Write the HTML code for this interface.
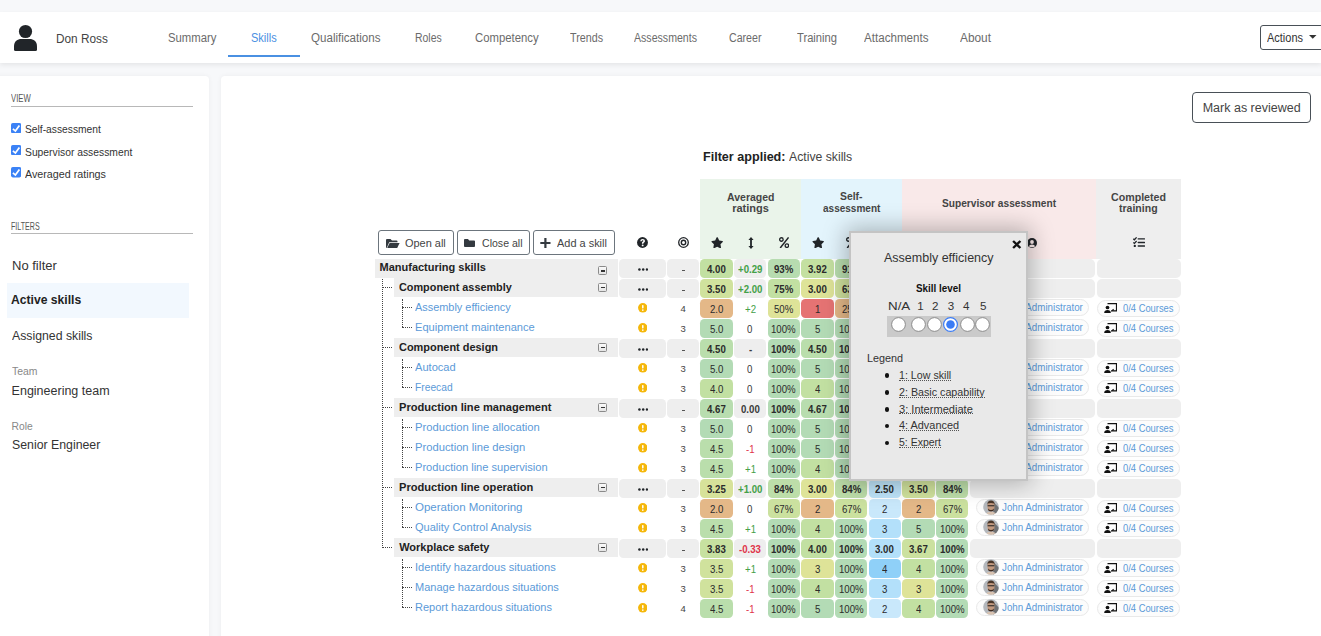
<!DOCTYPE html>
<html><head><meta charset="utf-8"><style>
html,body{margin:0;padding:0;}
body{width:1321px;height:636px;overflow:hidden;position:relative;background:#f7f8fa;font-family:"Liberation Sans",sans-serif;}
.t{position:absolute;white-space:nowrap;transform-origin:0 0;}
.r{position:absolute;}
</style></head><body>
<div class="r" style="left:0.00px;top:12.00px;width:1321.00px;height:51.00px;background:#fff;box-shadow:0 2px 5px rgba(0,0,0,.08);"></div>
<svg class="r" style="left:13.00px;top:24.00px" width="25.00" height="28.00" viewBox="0 0 25 28"><circle cx="12.5" cy="7.5" r="6.6" fill="#212529"/><path d="M1 22.5 C1 17 4.5 15 8.5 15 H16.5 C20.5 15 24 17 24 22.5 V25.5 Q24 27 22.5 27 H2.5 Q1 27 1 25.5 Z" fill="#212529"/></svg>
<div class="t" style="left:55.50px;top:33.00px;font-size:12.50px;line-height:12.50px;transform:scaleX(0.9454);color:#444;">Don Ross</div>
<div class="t" style="left:167.80px;top:32.00px;font-size:12.00px;line-height:12.00px;transform:scaleX(0.9426);color:#6b6b6b;">Summary</div>
<div class="t" style="left:251.00px;top:32.00px;font-size:12.00px;line-height:12.00px;transform:scaleX(0.9179);color:#4a90e2;">Skills</div>
<div class="t" style="left:311.00px;top:32.00px;font-size:12.00px;line-height:12.00px;transform:scaleX(0.9646);color:#6b6b6b;">Qualifications</div>
<div class="t" style="left:414.70px;top:32.00px;font-size:12.00px;line-height:12.00px;transform:scaleX(0.8697);color:#6b6b6b;">Roles</div>
<div class="t" style="left:475.40px;top:32.00px;font-size:12.00px;line-height:12.00px;transform:scaleX(0.9443);color:#6b6b6b;">Competency</div>
<div class="t" style="left:570.00px;top:32.00px;font-size:12.00px;line-height:12.00px;transform:scaleX(0.8943);color:#6b6b6b;">Trends</div>
<div class="t" style="left:634.00px;top:32.00px;font-size:12.00px;line-height:12.00px;transform:scaleX(0.8830);color:#6b6b6b;">Assessments</div>
<div class="t" style="left:728.50px;top:32.00px;font-size:12.00px;line-height:12.00px;transform:scaleX(0.8856);color:#6b6b6b;">Career</div>
<div class="t" style="left:797.00px;top:32.00px;font-size:12.00px;line-height:12.00px;transform:scaleX(0.9324);color:#6b6b6b;">Training</div>
<div class="t" style="left:864.00px;top:32.00px;font-size:12.00px;line-height:12.00px;transform:scaleX(0.9670);color:#6b6b6b;">Attachments</div>
<div class="t" style="left:960.00px;top:32.00px;font-size:12.00px;line-height:12.00px;transform:scaleX(0.9888);color:#6b6b6b;">About</div>
<div class="r" style="left:228.00px;top:55.00px;width:72.00px;height:2.00px;background:#4a90e2;"></div>
<div class="r" style="left:1260.00px;top:25.00px;width:80.00px;height:25.00px;border:1px solid #495057;border-radius:3px;box-sizing:border-box;background:#fff;"></div>
<div class="t" style="left:1267.00px;top:32.00px;font-size:12.00px;line-height:12.00px;transform:scaleX(0.9149);color:#333;">Actions</div>
<svg class="r" style="left:1309.00px;top:35.00px" width="8.00" height="4.00" viewBox="0 0 8 4"><path d="M0 0 H7.5 L3.75 3.8 Z" fill="#333"/></svg>
<div class="r" style="left:-10.00px;top:76.00px;width:219.00px;height:600.00px;background:#fff;border-radius:4px;box-shadow:0 0 5px rgba(0,0,0,.05);"></div>
<div class="r" style="left:221.00px;top:76.00px;width:1110.00px;height:600.00px;background:#fff;border-radius:4px;box-shadow:0 0 5px rgba(0,0,0,.05);"></div>
<div class="t" style="left:11.30px;top:94.00px;font-size:10.20px;line-height:10.20px;transform:scaleX(0.7562);color:#555;">VIEW</div>
<div class="r" style="left:11.00px;top:106.00px;width:182.00px;height:1.00px;background:#b8b8b8;"></div>
<svg class="r" style="left:11.00px;top:122.70px" width="10.20" height="10.40" viewBox="0 0 10.2 10.4"><rect x="0" y="0" width="10.2" height="10.4" rx="1.8" fill="#3b82f6"/><path d="M1.9 5.9 L4.4 8.1 L8.4 2.5" stroke="#fff" stroke-width="1.7" fill="none"/></svg>
<div class="t" style="left:24.50px;top:123.00px;font-size:11.60px;line-height:11.60px;transform:scaleX(0.8851);color:#333;">Self-assessment</div>
<svg class="r" style="left:11.00px;top:145.00px" width="10.20" height="10.40" viewBox="0 0 10.2 10.4"><rect x="0" y="0" width="10.2" height="10.4" rx="1.8" fill="#3b82f6"/><path d="M1.9 5.9 L4.4 8.1 L8.4 2.5" stroke="#fff" stroke-width="1.7" fill="none"/></svg>
<div class="t" style="left:24.50px;top:146.00px;font-size:11.60px;line-height:11.60px;transform:scaleX(0.8901);color:#333;">Supervisor assessment</div>
<svg class="r" style="left:11.00px;top:167.30px" width="10.20" height="10.40" viewBox="0 0 10.2 10.4"><rect x="0" y="0" width="10.2" height="10.4" rx="1.8" fill="#3b82f6"/><path d="M1.9 5.9 L4.4 8.1 L8.4 2.5" stroke="#fff" stroke-width="1.7" fill="none"/></svg>
<div class="t" style="left:24.50px;top:168.00px;font-size:11.60px;line-height:11.60px;transform:scaleX(0.9257);color:#333;">Averaged ratings</div>
<div class="t" style="left:11.30px;top:222.00px;font-size:10.20px;line-height:10.20px;transform:scaleX(0.6966);color:#555;">FILTERS</div>
<div class="r" style="left:11.00px;top:233.00px;width:182.00px;height:1.00px;background:#b8b8b8;"></div>
<div class="t" style="left:11.80px;top:260.00px;font-size:12.50px;line-height:12.50px;transform:scaleX(1.0407);color:#333;">No filter</div>
<div class="r" style="left:7.00px;top:283.00px;width:182.00px;height:35.00px;background:#f2f8fe;"></div>
<div class="t" style="left:11.30px;top:294.00px;font-size:12.50px;line-height:12.50px;font-weight:bold;transform:scaleX(0.9716);color:#222;">Active skills</div>
<div class="t" style="left:11.50px;top:330.00px;font-size:12.50px;line-height:12.50px;transform:scaleX(0.9817);color:#333;">Assigned skills</div>
<div class="t" style="left:11.60px;top:367.00px;font-size:10.30px;line-height:10.30px;transform:scaleX(1.0119);color:#888;">Team</div>
<div class="t" style="left:11.60px;top:385.00px;font-size:12.50px;line-height:12.50px;color:#333;">Engineering team</div>
<div class="t" style="left:11.60px;top:422.00px;font-size:10.30px;line-height:10.30px;color:#888;">Role</div>
<div class="t" style="left:11.60px;top:439.00px;font-size:12.50px;line-height:12.50px;transform:scaleX(0.9849);color:#333;">Senior Engineer</div>
<div class="r" style="left:1192.00px;top:92.00px;width:119.00px;height:31.00px;border:1px solid #495057;border-radius:4px;box-sizing:border-box;"></div>
<div class="t" style="left:1202.70px;top:102.00px;font-size:12.50px;line-height:12.50px;color:#444;">Mark as reviewed</div>
<div class="t" style="left:702.80px;top:151.00px;font-size:12.50px;line-height:12.50px;font-weight:bold;transform:scaleX(1.0067);color:#222;">Filter applied:</div>
<div class="t" style="left:789.40px;top:151.00px;font-size:12.50px;line-height:12.50px;transform:scaleX(0.9783);color:#444;">Active skills</div>
<div class="r" style="left:700.00px;top:179.00px;width:101.00px;height:80.00px;background:#eaf4ea;"></div>
<div class="r" style="left:801.00px;top:179.00px;width:101.00px;height:80.00px;background:#e3f4fc;"></div>
<div class="r" style="left:902.00px;top:179.00px;width:194.00px;height:80.00px;background:#f9e9e9;"></div>
<div class="r" style="left:1096.00px;top:179.00px;width:85.00px;height:80.00px;background:#eeeeee;"></div>
<div class="t" style="left:726.80px;top:192.00px;font-size:11.00px;line-height:11.00px;font-weight:bold;transform:scaleX(0.9548);color:#454545;font-weight:600;">Averaged</div>
<div class="t" style="left:732.15px;top:203.00px;font-size:11.00px;line-height:11.00px;font-weight:bold;color:#454545;">ratings</div>
<div class="t" style="left:839.80px;top:191.00px;font-size:11.00px;line-height:11.00px;font-weight:bold;transform:scaleX(0.9434);color:#454545;">Self-</div>
<div class="t" style="left:822.60px;top:203.00px;font-size:11.00px;line-height:11.00px;font-weight:bold;transform:scaleX(0.9111);color:#454545;">assessment</div>
<div class="t" style="left:942.00px;top:198.00px;font-size:11.00px;line-height:11.00px;font-weight:bold;transform:scaleX(0.9231);color:#454545;">Supervisor assessment</div>
<div class="t" style="left:1111.00px;top:192.00px;font-size:11.00px;line-height:11.00px;font-weight:bold;transform:scaleX(0.9675);color:#454545;">Completed</div>
<div class="t" style="left:1119.40px;top:203.00px;font-size:11.00px;line-height:11.00px;font-weight:bold;transform:scaleX(0.9566);color:#454545;">training</div>
<div class="r" style="left:378.30px;top:230.40px;width:75.30px;height:24.50px;border:1px solid #6c757d;border-radius:3px;box-sizing:border-box;background:#fff;"></div>
<div class="r" style="left:457.00px;top:230.40px;width:73.00px;height:24.50px;border:1px solid #6c757d;border-radius:3px;box-sizing:border-box;background:#fff;"></div>
<div class="r" style="left:533.20px;top:230.40px;width:81.50px;height:24.50px;border:1px solid #6c757d;border-radius:3px;box-sizing:border-box;background:#fff;"></div>
<svg class="r" style="left:385.50px;top:238.50px" width="14.00" height="9.00" viewBox="0 0 14 9"><path d="M0 1 Q0 0 1 0 H4.5 L6 1.5 H10.5 Q11.5 1.5 11.5 2.5 V3.3 H3.2 L0.8 8.8 H0 Z" fill="#343a40"/><path d="M3.6 3.9 H13.6 L11.2 9 H1.2 Z" fill="#343a40"/></svg>
<div class="t" style="left:405.20px;top:238.00px;font-size:11.50px;line-height:11.50px;transform:scaleX(0.9522);color:#444;">Open all</div>
<svg class="r" style="left:464.00px;top:239.00px" width="11.00" height="8.00" viewBox="0 0 11 8"><path d="M0 0.9 Q0 0 0.9 0 H4 L5.2 1.4 H10.1 Q11 1.4 11 2.3 V7.1 Q11 8 10.1 8 H0.9 Q0 8 0 7.1 Z" fill="#343a40"/></svg>
<div class="t" style="left:481.70px;top:238.00px;font-size:11.50px;line-height:11.50px;transform:scaleX(0.9184);color:#444;">Close all</div>
<svg class="r" style="left:540.00px;top:238.00px" width="11.00" height="10.00" viewBox="0 0 11 10"><path d="M4.3 0 H6.5 V3.9 H10.5 V6.1 H6.5 V10 H4.3 V6.1 H0.3 V3.9 H4.3 Z" fill="#343a40"/></svg>
<div class="t" style="left:557.20px;top:238.00px;font-size:11.50px;line-height:11.50px;transform:scaleX(0.9523);color:#444;">Add a skill</div>
<svg class="r" style="left:637.00px;top:236.80px" width="11.00" height="11.00" viewBox="0 0 11 11"><circle cx="5.5" cy="5.5" r="5.45" fill="#212529"/><path d="M3.2 4.3 Q3.3 1.9 5.6 1.9 Q8 1.9 8 3.9 Q8 5.1 6.8 5.7 Q6.4 5.9 6.4 6.7 H4.9 Q4.8 5.2 5.9 4.6 Q6.4 4.3 6.4 3.9 Q6.4 3.3 5.6 3.3 Q4.8 3.3 4.7 4.3 Z" fill="#fff"/><circle cx="5.65" cy="8.4" r="0.95" fill="#fff"/></svg>
<svg class="r" style="left:677.70px;top:236.80px" width="11.00" height="11.00" viewBox="0 0 11 11"><circle cx="5.5" cy="5.5" r="4.8" fill="none" stroke="#212529" stroke-width="1.3"/><circle cx="5.5" cy="5.5" r="2.2" fill="none" stroke="#212529" stroke-width="1.4"/></svg>
<svg class="r" style="left:710.80px;top:236.70px" width="12.40" height="11.40" viewBox="0 0 576 512"><path d="M259.3 17.8L194 150.2 47.9 171.5c-26.2 3.8-36.7 36.1-17.7 54.6l105.7 103-25 145.5c-4.5 26.3 23.2 46 46.4 33.7L288 439.6l130.7 68.7c23.2 12.2 50.9-7.4 46.4-33.7l-25-145.5 105.7-103c19-18.5 8.5-50.8-17.7-54.6L382 150.2 316.7 17.8c-11.7-23.6-45.6-23.9-57.4 0z" fill="#212529"/></svg>
<svg class="r" style="left:747.50px;top:236.50px" width="6.00" height="12.00" viewBox="0 0 6 12"><path d="M3 0 L5.6 3 H3.9 V9 H5.6 L3 12 L0.4 9 H2.1 V3 H0.4 Z" fill="#212529"/></svg>
<svg class="r" style="left:778.80px;top:236.80px" width="10.40" height="11.40" viewBox="0 0 10.4 11.4"><circle cx="2.4" cy="2.5" r="1.75" fill="none" stroke="#212529" stroke-width="1.3"/><circle cx="7.9" cy="8.7" r="1.75" fill="none" stroke="#212529" stroke-width="1.3"/><path d="M9.6 0.4 L1.2 11" stroke="#212529" stroke-width="1.5"/></svg>
<svg class="r" style="left:811.50px;top:236.70px" width="12.40" height="11.40" viewBox="0 0 576 512"><path d="M259.3 17.8L194 150.2 47.9 171.5c-26.2 3.8-36.7 36.1-17.7 54.6l105.7 103-25 145.5c-4.5 26.3 23.2 46 46.4 33.7L288 439.6l130.7 68.7c23.2 12.2 50.9-7.4 46.4-33.7l-25-145.5 105.7-103c19-18.5 8.5-50.8-17.7-54.6L382 150.2 316.7 17.8c-11.7-23.6-45.6-23.9-57.4 0z" fill="#212529"/></svg>
<svg class="r" style="left:845.60px;top:236.80px" width="10.40" height="11.40" viewBox="0 0 10.4 11.4"><circle cx="2.4" cy="2.5" r="1.75" fill="none" stroke="#212529" stroke-width="1.3"/><circle cx="7.9" cy="8.7" r="1.75" fill="none" stroke="#212529" stroke-width="1.3"/><path d="M9.6 0.4 L1.2 11" stroke="#212529" stroke-width="1.5"/></svg>
<svg class="r" style="left:1027.20px;top:237.60px" width="10.00" height="10.00" viewBox="0 0 10 10"><circle cx="5" cy="5" r="5" fill="#212529"/><circle cx="5" cy="4" r="1.9" fill="#f9e9e9"/><path d="M1.8 8.2 Q2.6 6.4 5 6.4 Q7.4 6.4 8.2 8.2 Q6.9 9.3 5 9.3 Q3.1 9.3 1.8 8.2 Z" fill="#f9e9e9"/></svg>
<svg class="r" style="left:1132.80px;top:236.80px" width="12.50" height="10.50" viewBox="0 0 12.5 10.5"><path d="M0.3 1.8 L1.4 2.8 L3.6 0.4" stroke="#212529" stroke-width="1.3" fill="none"/><path d="M0.3 5.4 L1.4 6.4 L3.6 4" stroke="#212529" stroke-width="1.3" fill="none"/><circle cx="1.8" cy="9" r="1.15" fill="#212529"/><rect x="4.6" y="1.2" width="7.5" height="1.35" rx="0.6" fill="#212529"/><rect x="4.6" y="4.8" width="7.5" height="1.35" rx="0.6" fill="#212529"/><rect x="4.6" y="8.35" width="7.5" height="1.35" rx="0.6" fill="#212529"/></svg>
<div class="r" style="left:375.00px;top:259.30px;width:242.70px;height:18.70px;background:#eeeeee;"></div>
<div class="t" style="left:379.50px;top:262.00px;font-size:11.00px;line-height:11.00px;font-weight:bold;color:#222;">Manufacturing skills</div>
<div class="r" style="left:598.20px;top:266.40px;width:9.20px;height:9.00px;border:1px solid #8a8a8a;border-radius:1.5px;box-sizing:border-box;background:linear-gradient(#fafafa,#e4e4e4);"></div>
<div class="r" style="left:601.00px;top:270.30px;width:4.40px;height:1.30px;background:#333;"></div>
<div class="r" style="left:619.00px;top:259.30px;width:47.00px;height:18.80px;background:#eeeeee;border-radius:4.5px;"></div>
<svg class="r" style="left:637.50px;top:267.50px" width="10.50" height="3.20" viewBox="0 0 10.5 3.2"><circle cx="1.4" cy="1.5" r="1.25" fill="#212529"/><circle cx="5.2" cy="1.5" r="1.25" fill="#212529"/><circle cx="9" cy="1.5" r="1.25" fill="#212529"/></svg>
<div class="r" style="left:667.20px;top:259.30px;width:31.60px;height:18.80px;background:#eeeeee;border-radius:4.5px;"></div>
<div class="r" style="left:682.00px;top:269.60px;width:3.00px;height:1.00px;background:#555;"></div>
<div class="r" style="left:700.30px;top:259.30px;width:32.40px;height:18.80px;background:rgb(194,224,162);border-radius:4.5px;"></div>
<div class="t" style="left:707.10px;top:265.00px;font-size:10.40px;line-height:10.40px;font-weight:bold;transform:scaleX(0.9284);color:#2b2b2b;">4.00</div>
<div class="r" style="left:733.97px;top:259.30px;width:32.40px;height:18.80px;background:#eeeeee;border-radius:4.5px;"></div>
<div class="t" style="left:737.96px;top:265.00px;font-size:10.40px;line-height:10.40px;font-weight:bold;transform:scaleX(0.9284);color:#43a047;">+0.29</div>
<div class="r" style="left:767.64px;top:259.30px;width:32.40px;height:18.80px;background:rgb(183,220,176);border-radius:4.5px;"></div>
<div class="t" style="left:774.18px;top:265.00px;font-size:10.40px;line-height:10.40px;font-weight:bold;transform:scaleX(0.9284);color:#2b2b2b;">93%</div>
<div class="r" style="left:801.31px;top:259.30px;width:32.40px;height:18.80px;background:rgb(196,224,161);border-radius:4.5px;"></div>
<div class="t" style="left:808.11px;top:265.00px;font-size:10.40px;line-height:10.40px;font-weight:bold;transform:scaleX(0.9284);color:#2b2b2b;">3.92</div>
<div class="r" style="left:834.98px;top:259.30px;width:32.40px;height:18.80px;background:rgb(184,221,174);border-radius:4.5px;"></div>
<div class="t" style="left:841.52px;top:265.00px;font-size:10.40px;line-height:10.40px;font-weight:bold;transform:scaleX(0.9284);color:#2b2b2b;">91%</div>
<div class="r" style="left:868.65px;top:259.30px;width:32.40px;height:18.80px;background:rgb(176,223,250);border-radius:4.5px;"></div>
<div class="t" style="left:875.45px;top:265.00px;font-size:10.40px;line-height:10.40px;font-weight:bold;transform:scaleX(0.9284);color:#2b2b2b;">3.08</div>
<div class="r" style="left:902.32px;top:259.30px;width:32.40px;height:18.80px;background:rgb(193,224,164);border-radius:4.5px;"></div>
<div class="t" style="left:909.12px;top:265.00px;font-size:10.40px;line-height:10.40px;font-weight:bold;transform:scaleX(0.9284);color:#2b2b2b;">4.08</div>
<div class="r" style="left:935.99px;top:259.30px;width:32.40px;height:18.80px;background:rgb(182,220,177);border-radius:4.5px;"></div>
<div class="t" style="left:942.53px;top:265.00px;font-size:10.40px;line-height:10.40px;font-weight:bold;transform:scaleX(0.9284);color:#2b2b2b;">95%</div>
<div class="r" style="left:969.70px;top:259.30px;width:125.40px;height:18.80px;background:#eeeeee;border-radius:5px;"></div>
<div class="r" style="left:1097.00px;top:259.30px;width:84.00px;height:18.80px;background:#eeeeee;border-radius:5px;"></div>
<div class="r" style="left:394.20px;top:278.30px;width:223.50px;height:19.20px;background:#eeeeee;"></div>
<div class="t" style="left:399.20px;top:282.00px;font-size:11.00px;line-height:11.00px;font-weight:bold;transform:scaleX(0.9869);color:#222;">Component assembly</div>
<div class="r" style="left:598.20px;top:283.20px;width:9.20px;height:9.00px;border:1px solid #8a8a8a;border-radius:1.5px;box-sizing:border-box;background:linear-gradient(#fafafa,#e4e4e4);"></div>
<div class="r" style="left:601.00px;top:287.10px;width:4.40px;height:1.30px;background:#333;"></div>
<div class="r" style="left:619.00px;top:279.30px;width:47.00px;height:18.80px;background:#eeeeee;border-radius:4.5px;"></div>
<svg class="r" style="left:637.50px;top:287.50px" width="10.50" height="3.20" viewBox="0 0 10.5 3.2"><circle cx="1.4" cy="1.5" r="1.25" fill="#212529"/><circle cx="5.2" cy="1.5" r="1.25" fill="#212529"/><circle cx="9" cy="1.5" r="1.25" fill="#212529"/></svg>
<div class="r" style="left:667.20px;top:279.30px;width:31.60px;height:18.80px;background:#eeeeee;border-radius:4.5px;"></div>
<div class="r" style="left:682.00px;top:289.60px;width:3.00px;height:1.00px;background:#555;"></div>
<div class="r" style="left:700.30px;top:279.30px;width:32.40px;height:18.80px;background:rgb(208,226,157);border-radius:4.5px;"></div>
<div class="t" style="left:707.10px;top:285.00px;font-size:10.40px;line-height:10.40px;font-weight:bold;transform:scaleX(0.9284);color:#2b2b2b;">3.50</div>
<div class="r" style="left:733.97px;top:279.30px;width:32.40px;height:18.80px;background:#eeeeee;border-radius:4.5px;"></div>
<div class="t" style="left:737.96px;top:285.00px;font-size:10.40px;line-height:10.40px;font-weight:bold;transform:scaleX(0.9284);color:#43a047;">+2.00</div>
<div class="r" style="left:767.64px;top:279.30px;width:32.40px;height:18.80px;background:rgb(194,224,162);border-radius:4.5px;"></div>
<div class="t" style="left:774.18px;top:285.00px;font-size:10.40px;line-height:10.40px;font-weight:bold;transform:scaleX(0.9284);color:#2b2b2b;">75%</div>
<div class="r" style="left:801.31px;top:279.30px;width:32.40px;height:18.80px;background:rgb(222,227,152);border-radius:4.5px;"></div>
<div class="t" style="left:808.11px;top:285.00px;font-size:10.40px;line-height:10.40px;font-weight:bold;transform:scaleX(0.9284);color:#2b2b2b;">3.00</div>
<div class="r" style="left:834.98px;top:279.30px;width:32.40px;height:18.80px;background:rgb(207,225,157);border-radius:4.5px;"></div>
<div class="t" style="left:841.52px;top:285.00px;font-size:10.40px;line-height:10.40px;font-weight:bold;transform:scaleX(0.9284);color:#2b2b2b;">63%</div>
<div class="r" style="left:868.65px;top:279.30px;width:32.40px;height:18.80px;background:rgb(190,228,250);border-radius:4.5px;"></div>
<div class="t" style="left:875.45px;top:285.00px;font-size:10.40px;line-height:10.40px;font-weight:bold;transform:scaleX(0.9284);color:#2b2b2b;">2.50</div>
<div class="r" style="left:902.32px;top:279.30px;width:32.40px;height:18.80px;background:rgb(194,224,162);border-radius:4.5px;"></div>
<div class="t" style="left:909.12px;top:285.00px;font-size:10.40px;line-height:10.40px;font-weight:bold;transform:scaleX(0.9284);color:#2b2b2b;">4.00</div>
<div class="r" style="left:935.99px;top:279.30px;width:32.40px;height:18.80px;background:rgb(186,221,172);border-radius:4.5px;"></div>
<div class="t" style="left:942.53px;top:285.00px;font-size:10.40px;line-height:10.40px;font-weight:bold;transform:scaleX(0.9284);color:#2b2b2b;">88%</div>
<div class="r" style="left:969.70px;top:279.30px;width:125.40px;height:18.80px;background:#eeeeee;border-radius:5px;"></div>
<div class="r" style="left:1097.00px;top:279.30px;width:84.00px;height:18.80px;background:#eeeeee;border-radius:5px;"></div>
<div class="t" style="left:415.40px;top:302.00px;font-size:10.50px;line-height:10.50px;transform:scaleX(1.0391);color:#5b9ad8;">Assembly efficiency</div>
<svg class="r" style="left:637.60px;top:303.10px" width="9.60" height="9.60" viewBox="0 0 9.6 9.6"><circle cx="4.8" cy="4.8" r="4.75" fill="#f5b70a"/><rect x="4.05" y="2.1" width="1.5" height="3.3" rx="0.6" fill="#fff"/><circle cx="4.8" cy="7.1" r="0.85" fill="#fff"/></svg>
<div class="t" style="left:680.55px;top:304.00px;font-size:9.50px;line-height:9.50px;color:#444;">4</div>
<div class="r" style="left:700.30px;top:299.30px;width:32.40px;height:18.80px;background:rgb(228,184,136);border-radius:4.5px;"></div>
<div class="t" style="left:709.79px;top:305.00px;font-size:10.40px;line-height:10.40px;transform:scaleX(0.9284);color:#2b2b2b;">2.0</div>
<div class="t" style="left:744.67px;top:305.00px;font-size:10.40px;line-height:10.40px;transform:scaleX(0.9284);color:#43a047;">+2</div>
<div class="r" style="left:767.64px;top:299.30px;width:32.40px;height:18.80px;background:rgb(222,227,152);border-radius:4.5px;"></div>
<div class="t" style="left:774.18px;top:305.00px;font-size:10.40px;line-height:10.40px;transform:scaleX(0.9284);color:#2b2b2b;">50%</div>
<div class="r" style="left:801.31px;top:299.30px;width:32.40px;height:18.80px;background:rgb(229,115,115);border-radius:4.5px;"></div>
<div class="t" style="left:814.82px;top:305.00px;font-size:10.40px;line-height:10.40px;transform:scaleX(0.9284);color:#2b2b2b;">1</div>
<div class="r" style="left:834.98px;top:299.30px;width:32.40px;height:18.80px;background:rgb(228,184,136);border-radius:4.5px;"></div>
<div class="t" style="left:841.52px;top:305.00px;font-size:10.40px;line-height:10.40px;transform:scaleX(0.9284);color:#2b2b2b;">25%</div>
<div class="r" style="left:868.65px;top:299.30px;width:32.40px;height:18.80px;background:rgb(179,224,250);border-radius:4.5px;"></div>
<div class="t" style="left:882.16px;top:305.00px;font-size:10.40px;line-height:10.40px;transform:scaleX(0.9284);color:#2b2b2b;">3</div>
<div class="r" style="left:902.32px;top:299.30px;width:32.40px;height:18.80px;background:rgb(222,227,152);border-radius:4.5px;"></div>
<div class="t" style="left:915.83px;top:305.00px;font-size:10.40px;line-height:10.40px;transform:scaleX(0.9284);color:#2b2b2b;">3</div>
<div class="r" style="left:935.99px;top:299.30px;width:32.40px;height:18.80px;background:rgb(194,224,162);border-radius:4.5px;"></div>
<div class="t" style="left:942.53px;top:305.00px;font-size:10.40px;line-height:10.40px;transform:scaleX(0.9284);color:#2b2b2b;">75%</div>
<div class="r" style="left:976.00px;top:298.60px;width:113.00px;height:17.20px;border:1px solid #e9e9e9;border-radius:9px;box-sizing:border-box;background:#fcfcfc;"></div>
<svg class="r" style="left:983.00px;top:299.10px" width="16.00" height="16.00" viewBox="0 0 16 16"><defs><clipPath id="cp2"><circle cx="8" cy="8" r="7.8"/></clipPath></defs><g clip-path="url(#cp2)"><rect width="16" height="16" fill="#b4b8bd"/><path d="M11 4 Q14 6 16 9 V16 H10 Z" fill="#6f7174"/><path d="M4.4 7 Q4.3 2.8 8 2.6 Q11.7 2.8 11.6 7 L11.2 10.8 Q8 14 4.8 10.8 Z" fill="#c29a80"/><path d="M4.2 6.2 Q4.2 1.6 8 1.6 Q11.8 1.6 11.8 6.2 L11.2 4.6 Q8 3.3 4.8 4.6 Z" fill="#4a3628"/><rect x="4.6" y="6.2" width="6.8" height="1.1" fill="#2e2a28"/><path d="M5 9.6 Q8 12.6 11 9.6 L10.6 11.6 Q8 13.6 5.4 11.6 Z" fill="#3f2e24"/><path d="M2.5 16 Q3.5 12.8 8 12.8 Q12.5 12.8 13.5 16 Z" fill="#d8c2b0"/></g></svg>
<div class="t" style="left:1002.00px;top:302.00px;font-size:10.50px;line-height:10.50px;transform:scaleX(0.9293);color:#5b9ad8;">John Administrator</div>
<div class="r" style="left:1096.70px;top:299.90px;width:83.60px;height:17.50px;border:1px solid #e9e9e9;border-radius:9px;box-sizing:border-box;background:#fcfcfc;"></div>
<svg class="r" style="left:1103.60px;top:303.20px" width="13.50" height="10.50" viewBox="0 0 13.5 10.5"><path d="M3.5 0.6 H12.5 V7.9 H7.2" fill="none" stroke="#111" stroke-width="1.2"/><path d="M6.6 8.4 L9.2 5.8 L10.3 7.3 Z" fill="#111"/><circle cx="3.5" cy="4.5" r="1.85" fill="#111"/><path d="M0.2 9.9 Q0.4 7.1 3.5 7.1 Q6.6 7.1 6.8 9.9 Z" fill="#111"/></svg>
<div class="t" style="left:1122.80px;top:303.00px;font-size:10.50px;line-height:10.50px;transform:scaleX(0.8922);color:#5b9ad8;">0/4 Courses</div>
<div class="t" style="left:415.40px;top:322.00px;font-size:10.50px;line-height:10.50px;transform:scaleX(1.0570);color:#5b9ad8;">Equipment maintenance</div>
<svg class="r" style="left:637.60px;top:323.10px" width="9.60" height="9.60" viewBox="0 0 9.6 9.6"><circle cx="4.8" cy="4.8" r="4.75" fill="#f5b70a"/><rect x="4.05" y="2.1" width="1.5" height="3.3" rx="0.6" fill="#fff"/><circle cx="4.8" cy="7.1" r="0.85" fill="#fff"/></svg>
<div class="t" style="left:680.55px;top:324.00px;font-size:9.50px;line-height:9.50px;color:#444;">3</div>
<div class="r" style="left:700.30px;top:319.30px;width:32.40px;height:18.80px;background:rgb(179,219,181);border-radius:4.5px;"></div>
<div class="t" style="left:709.79px;top:325.00px;font-size:10.40px;line-height:10.40px;transform:scaleX(0.9284);color:#2b2b2b;">5.0</div>
<div class="t" style="left:747.48px;top:325.00px;font-size:10.40px;line-height:10.40px;transform:scaleX(0.9284);color:#3a3a3a;">0</div>
<div class="r" style="left:767.64px;top:319.30px;width:32.40px;height:18.80px;background:rgb(179,219,181);border-radius:4.5px;"></div>
<div class="t" style="left:771.49px;top:325.00px;font-size:10.40px;line-height:10.40px;transform:scaleX(0.9284);color:#2b2b2b;">100%</div>
<div class="r" style="left:801.31px;top:319.30px;width:32.40px;height:18.80px;background:rgb(179,219,181);border-radius:4.5px;"></div>
<div class="t" style="left:814.82px;top:325.00px;font-size:10.40px;line-height:10.40px;transform:scaleX(0.9284);color:#2b2b2b;">5</div>
<div class="r" style="left:834.98px;top:319.30px;width:32.40px;height:18.80px;background:rgb(179,219,181);border-radius:4.5px;"></div>
<div class="t" style="left:838.83px;top:325.00px;font-size:10.40px;line-height:10.40px;transform:scaleX(0.9284);color:#2b2b2b;">100%</div>
<div class="r" style="left:868.65px;top:319.30px;width:32.40px;height:18.80px;background:rgb(179,224,250);border-radius:4.5px;"></div>
<div class="t" style="left:882.16px;top:325.00px;font-size:10.40px;line-height:10.40px;transform:scaleX(0.9284);color:#2b2b2b;">3</div>
<div class="r" style="left:902.32px;top:319.30px;width:32.40px;height:18.80px;background:rgb(179,219,181);border-radius:4.5px;"></div>
<div class="t" style="left:915.83px;top:325.00px;font-size:10.40px;line-height:10.40px;transform:scaleX(0.9284);color:#2b2b2b;">5</div>
<div class="r" style="left:935.99px;top:319.30px;width:32.40px;height:18.80px;background:rgb(179,219,181);border-radius:4.5px;"></div>
<div class="t" style="left:939.84px;top:325.00px;font-size:10.40px;line-height:10.40px;transform:scaleX(0.9284);color:#2b2b2b;">100%</div>
<div class="r" style="left:976.00px;top:318.60px;width:113.00px;height:17.20px;border:1px solid #e9e9e9;border-radius:9px;box-sizing:border-box;background:#fcfcfc;"></div>
<svg class="r" style="left:983.00px;top:319.10px" width="16.00" height="16.00" viewBox="0 0 16 16"><defs><clipPath id="cp3"><circle cx="8" cy="8" r="7.8"/></clipPath></defs><g clip-path="url(#cp3)"><rect width="16" height="16" fill="#b4b8bd"/><path d="M11 4 Q14 6 16 9 V16 H10 Z" fill="#6f7174"/><path d="M4.4 7 Q4.3 2.8 8 2.6 Q11.7 2.8 11.6 7 L11.2 10.8 Q8 14 4.8 10.8 Z" fill="#c29a80"/><path d="M4.2 6.2 Q4.2 1.6 8 1.6 Q11.8 1.6 11.8 6.2 L11.2 4.6 Q8 3.3 4.8 4.6 Z" fill="#4a3628"/><rect x="4.6" y="6.2" width="6.8" height="1.1" fill="#2e2a28"/><path d="M5 9.6 Q8 12.6 11 9.6 L10.6 11.6 Q8 13.6 5.4 11.6 Z" fill="#3f2e24"/><path d="M2.5 16 Q3.5 12.8 8 12.8 Q12.5 12.8 13.5 16 Z" fill="#d8c2b0"/></g></svg>
<div class="t" style="left:1002.00px;top:322.00px;font-size:10.50px;line-height:10.50px;transform:scaleX(0.9293);color:#5b9ad8;">John Administrator</div>
<div class="r" style="left:1096.70px;top:319.90px;width:83.60px;height:17.50px;border:1px solid #e9e9e9;border-radius:9px;box-sizing:border-box;background:#fcfcfc;"></div>
<svg class="r" style="left:1103.60px;top:323.20px" width="13.50" height="10.50" viewBox="0 0 13.5 10.5"><path d="M3.5 0.6 H12.5 V7.9 H7.2" fill="none" stroke="#111" stroke-width="1.2"/><path d="M6.6 8.4 L9.2 5.8 L10.3 7.3 Z" fill="#111"/><circle cx="3.5" cy="4.5" r="1.85" fill="#111"/><path d="M0.2 9.9 Q0.4 7.1 3.5 7.1 Q6.6 7.1 6.8 9.9 Z" fill="#111"/></svg>
<div class="t" style="left:1122.80px;top:323.00px;font-size:10.50px;line-height:10.50px;transform:scaleX(0.8922);color:#5b9ad8;">0/4 Courses</div>
<div class="r" style="left:394.20px;top:338.30px;width:223.50px;height:19.20px;background:#eeeeee;"></div>
<div class="t" style="left:399.20px;top:342.00px;font-size:11.00px;line-height:11.00px;font-weight:bold;transform:scaleX(0.9940);color:#222;">Component design</div>
<div class="r" style="left:598.20px;top:343.20px;width:9.20px;height:9.00px;border:1px solid #8a8a8a;border-radius:1.5px;box-sizing:border-box;background:linear-gradient(#fafafa,#e4e4e4);"></div>
<div class="r" style="left:601.00px;top:347.10px;width:4.40px;height:1.30px;background:#333;"></div>
<div class="r" style="left:619.00px;top:339.30px;width:47.00px;height:18.80px;background:#eeeeee;border-radius:4.5px;"></div>
<svg class="r" style="left:637.50px;top:347.50px" width="10.50" height="3.20" viewBox="0 0 10.5 3.2"><circle cx="1.4" cy="1.5" r="1.25" fill="#212529"/><circle cx="5.2" cy="1.5" r="1.25" fill="#212529"/><circle cx="9" cy="1.5" r="1.25" fill="#212529"/></svg>
<div class="r" style="left:667.20px;top:339.30px;width:31.60px;height:18.80px;background:#eeeeee;border-radius:4.5px;"></div>
<div class="r" style="left:682.00px;top:349.60px;width:3.00px;height:1.00px;background:#555;"></div>
<div class="r" style="left:700.30px;top:339.30px;width:32.40px;height:18.80px;background:rgb(186,222,172);border-radius:4.5px;"></div>
<div class="t" style="left:707.10px;top:345.00px;font-size:10.40px;line-height:10.40px;font-weight:bold;transform:scaleX(0.9284);color:#2b2b2b;">4.50</div>
<div class="r" style="left:733.97px;top:339.30px;width:32.40px;height:18.80px;background:#eeeeee;border-radius:4.5px;"></div>
<div class="t" style="left:748.57px;top:345.00px;font-size:10.40px;line-height:10.40px;font-weight:bold;transform:scaleX(0.9284);color:#3a3a3a;">-</div>
<div class="r" style="left:767.64px;top:339.30px;width:32.40px;height:18.80px;background:rgb(179,219,181);border-radius:4.5px;"></div>
<div class="t" style="left:771.49px;top:345.00px;font-size:10.40px;line-height:10.40px;font-weight:bold;transform:scaleX(0.9284);color:#2b2b2b;">100%</div>
<div class="r" style="left:801.31px;top:339.30px;width:32.40px;height:18.80px;background:rgb(186,222,172);border-radius:4.5px;"></div>
<div class="t" style="left:808.11px;top:345.00px;font-size:10.40px;line-height:10.40px;font-weight:bold;transform:scaleX(0.9284);color:#2b2b2b;">4.50</div>
<div class="r" style="left:834.98px;top:339.30px;width:32.40px;height:18.80px;background:rgb(179,219,181);border-radius:4.5px;"></div>
<div class="t" style="left:838.83px;top:345.00px;font-size:10.40px;line-height:10.40px;font-weight:bold;transform:scaleX(0.9284);color:#2b2b2b;">100%</div>
<div class="r" style="left:868.65px;top:339.30px;width:32.40px;height:18.80px;background:rgb(179,224,250);border-radius:4.5px;"></div>
<div class="t" style="left:875.45px;top:345.00px;font-size:10.40px;line-height:10.40px;font-weight:bold;transform:scaleX(0.9284);color:#2b2b2b;">3.00</div>
<div class="r" style="left:902.32px;top:339.30px;width:32.40px;height:18.80px;background:rgb(186,222,172);border-radius:4.5px;"></div>
<div class="t" style="left:909.12px;top:345.00px;font-size:10.40px;line-height:10.40px;font-weight:bold;transform:scaleX(0.9284);color:#2b2b2b;">4.50</div>
<div class="r" style="left:935.99px;top:339.30px;width:32.40px;height:18.80px;background:rgb(179,219,181);border-radius:4.5px;"></div>
<div class="t" style="left:939.84px;top:345.00px;font-size:10.40px;line-height:10.40px;font-weight:bold;transform:scaleX(0.9284);color:#2b2b2b;">100%</div>
<div class="r" style="left:969.70px;top:339.30px;width:125.40px;height:18.80px;background:#eeeeee;border-radius:5px;"></div>
<div class="r" style="left:1097.00px;top:339.30px;width:84.00px;height:18.80px;background:#eeeeee;border-radius:5px;"></div>
<div class="t" style="left:415.40px;top:362.00px;font-size:10.50px;line-height:10.50px;transform:scaleX(1.0558);color:#5b9ad8;">Autocad</div>
<svg class="r" style="left:637.60px;top:363.10px" width="9.60" height="9.60" viewBox="0 0 9.6 9.6"><circle cx="4.8" cy="4.8" r="4.75" fill="#f5b70a"/><rect x="4.05" y="2.1" width="1.5" height="3.3" rx="0.6" fill="#fff"/><circle cx="4.8" cy="7.1" r="0.85" fill="#fff"/></svg>
<div class="t" style="left:680.55px;top:364.00px;font-size:9.50px;line-height:9.50px;color:#444;">3</div>
<div class="r" style="left:700.30px;top:359.30px;width:32.40px;height:18.80px;background:rgb(179,219,181);border-radius:4.5px;"></div>
<div class="t" style="left:709.79px;top:365.00px;font-size:10.40px;line-height:10.40px;transform:scaleX(0.9284);color:#2b2b2b;">5.0</div>
<div class="t" style="left:747.48px;top:365.00px;font-size:10.40px;line-height:10.40px;transform:scaleX(0.9284);color:#3a3a3a;">0</div>
<div class="r" style="left:767.64px;top:359.30px;width:32.40px;height:18.80px;background:rgb(179,219,181);border-radius:4.5px;"></div>
<div class="t" style="left:771.49px;top:365.00px;font-size:10.40px;line-height:10.40px;transform:scaleX(0.9284);color:#2b2b2b;">100%</div>
<div class="r" style="left:801.31px;top:359.30px;width:32.40px;height:18.80px;background:rgb(179,219,181);border-radius:4.5px;"></div>
<div class="t" style="left:814.82px;top:365.00px;font-size:10.40px;line-height:10.40px;transform:scaleX(0.9284);color:#2b2b2b;">5</div>
<div class="r" style="left:834.98px;top:359.30px;width:32.40px;height:18.80px;background:rgb(179,219,181);border-radius:4.5px;"></div>
<div class="t" style="left:838.83px;top:365.00px;font-size:10.40px;line-height:10.40px;transform:scaleX(0.9284);color:#2b2b2b;">100%</div>
<div class="r" style="left:868.65px;top:359.30px;width:32.40px;height:18.80px;background:rgb(179,224,250);border-radius:4.5px;"></div>
<div class="t" style="left:882.16px;top:365.00px;font-size:10.40px;line-height:10.40px;transform:scaleX(0.9284);color:#2b2b2b;">3</div>
<div class="r" style="left:902.32px;top:359.30px;width:32.40px;height:18.80px;background:rgb(179,219,181);border-radius:4.5px;"></div>
<div class="t" style="left:915.83px;top:365.00px;font-size:10.40px;line-height:10.40px;transform:scaleX(0.9284);color:#2b2b2b;">5</div>
<div class="r" style="left:935.99px;top:359.30px;width:32.40px;height:18.80px;background:rgb(179,219,181);border-radius:4.5px;"></div>
<div class="t" style="left:939.84px;top:365.00px;font-size:10.40px;line-height:10.40px;transform:scaleX(0.9284);color:#2b2b2b;">100%</div>
<div class="r" style="left:976.00px;top:358.60px;width:113.00px;height:17.20px;border:1px solid #e9e9e9;border-radius:9px;box-sizing:border-box;background:#fcfcfc;"></div>
<svg class="r" style="left:983.00px;top:359.10px" width="16.00" height="16.00" viewBox="0 0 16 16"><defs><clipPath id="cp5"><circle cx="8" cy="8" r="7.8"/></clipPath></defs><g clip-path="url(#cp5)"><rect width="16" height="16" fill="#b4b8bd"/><path d="M11 4 Q14 6 16 9 V16 H10 Z" fill="#6f7174"/><path d="M4.4 7 Q4.3 2.8 8 2.6 Q11.7 2.8 11.6 7 L11.2 10.8 Q8 14 4.8 10.8 Z" fill="#c29a80"/><path d="M4.2 6.2 Q4.2 1.6 8 1.6 Q11.8 1.6 11.8 6.2 L11.2 4.6 Q8 3.3 4.8 4.6 Z" fill="#4a3628"/><rect x="4.6" y="6.2" width="6.8" height="1.1" fill="#2e2a28"/><path d="M5 9.6 Q8 12.6 11 9.6 L10.6 11.6 Q8 13.6 5.4 11.6 Z" fill="#3f2e24"/><path d="M2.5 16 Q3.5 12.8 8 12.8 Q12.5 12.8 13.5 16 Z" fill="#d8c2b0"/></g></svg>
<div class="t" style="left:1002.00px;top:362.00px;font-size:10.50px;line-height:10.50px;transform:scaleX(0.9293);color:#5b9ad8;">John Administrator</div>
<div class="r" style="left:1096.70px;top:359.90px;width:83.60px;height:17.50px;border:1px solid #e9e9e9;border-radius:9px;box-sizing:border-box;background:#fcfcfc;"></div>
<svg class="r" style="left:1103.60px;top:363.20px" width="13.50" height="10.50" viewBox="0 0 13.5 10.5"><path d="M3.5 0.6 H12.5 V7.9 H7.2" fill="none" stroke="#111" stroke-width="1.2"/><path d="M6.6 8.4 L9.2 5.8 L10.3 7.3 Z" fill="#111"/><circle cx="3.5" cy="4.5" r="1.85" fill="#111"/><path d="M0.2 9.9 Q0.4 7.1 3.5 7.1 Q6.6 7.1 6.8 9.9 Z" fill="#111"/></svg>
<div class="t" style="left:1122.80px;top:363.00px;font-size:10.50px;line-height:10.50px;transform:scaleX(0.8922);color:#5b9ad8;">0/4 Courses</div>
<div class="t" style="left:415.40px;top:382.00px;font-size:10.50px;line-height:10.50px;transform:scaleX(0.9766);color:#5b9ad8;">Freecad</div>
<svg class="r" style="left:637.60px;top:383.10px" width="9.60" height="9.60" viewBox="0 0 9.6 9.6"><circle cx="4.8" cy="4.8" r="4.75" fill="#f5b70a"/><rect x="4.05" y="2.1" width="1.5" height="3.3" rx="0.6" fill="#fff"/><circle cx="4.8" cy="7.1" r="0.85" fill="#fff"/></svg>
<div class="t" style="left:680.55px;top:384.00px;font-size:9.50px;line-height:9.50px;color:#444;">3</div>
<div class="r" style="left:700.30px;top:379.30px;width:32.40px;height:18.80px;background:rgb(194,224,162);border-radius:4.5px;"></div>
<div class="t" style="left:709.79px;top:385.00px;font-size:10.40px;line-height:10.40px;transform:scaleX(0.9284);color:#2b2b2b;">4.0</div>
<div class="t" style="left:747.48px;top:385.00px;font-size:10.40px;line-height:10.40px;transform:scaleX(0.9284);color:#3a3a3a;">0</div>
<div class="r" style="left:767.64px;top:379.30px;width:32.40px;height:18.80px;background:rgb(179,219,181);border-radius:4.5px;"></div>
<div class="t" style="left:771.49px;top:385.00px;font-size:10.40px;line-height:10.40px;transform:scaleX(0.9284);color:#2b2b2b;">100%</div>
<div class="r" style="left:801.31px;top:379.30px;width:32.40px;height:18.80px;background:rgb(194,224,162);border-radius:4.5px;"></div>
<div class="t" style="left:814.82px;top:385.00px;font-size:10.40px;line-height:10.40px;transform:scaleX(0.9284);color:#2b2b2b;">4</div>
<div class="r" style="left:834.98px;top:379.30px;width:32.40px;height:18.80px;background:rgb(179,219,181);border-radius:4.5px;"></div>
<div class="t" style="left:838.83px;top:385.00px;font-size:10.40px;line-height:10.40px;transform:scaleX(0.9284);color:#2b2b2b;">100%</div>
<div class="r" style="left:868.65px;top:379.30px;width:32.40px;height:18.80px;background:rgb(179,224,250);border-radius:4.5px;"></div>
<div class="t" style="left:882.16px;top:385.00px;font-size:10.40px;line-height:10.40px;transform:scaleX(0.9284);color:#2b2b2b;">3</div>
<div class="r" style="left:902.32px;top:379.30px;width:32.40px;height:18.80px;background:rgb(194,224,162);border-radius:4.5px;"></div>
<div class="t" style="left:915.83px;top:385.00px;font-size:10.40px;line-height:10.40px;transform:scaleX(0.9284);color:#2b2b2b;">4</div>
<div class="r" style="left:935.99px;top:379.30px;width:32.40px;height:18.80px;background:rgb(179,219,181);border-radius:4.5px;"></div>
<div class="t" style="left:939.84px;top:385.00px;font-size:10.40px;line-height:10.40px;transform:scaleX(0.9284);color:#2b2b2b;">100%</div>
<div class="r" style="left:976.00px;top:378.60px;width:113.00px;height:17.20px;border:1px solid #e9e9e9;border-radius:9px;box-sizing:border-box;background:#fcfcfc;"></div>
<svg class="r" style="left:983.00px;top:379.10px" width="16.00" height="16.00" viewBox="0 0 16 16"><defs><clipPath id="cp6"><circle cx="8" cy="8" r="7.8"/></clipPath></defs><g clip-path="url(#cp6)"><rect width="16" height="16" fill="#b4b8bd"/><path d="M11 4 Q14 6 16 9 V16 H10 Z" fill="#6f7174"/><path d="M4.4 7 Q4.3 2.8 8 2.6 Q11.7 2.8 11.6 7 L11.2 10.8 Q8 14 4.8 10.8 Z" fill="#c29a80"/><path d="M4.2 6.2 Q4.2 1.6 8 1.6 Q11.8 1.6 11.8 6.2 L11.2 4.6 Q8 3.3 4.8 4.6 Z" fill="#4a3628"/><rect x="4.6" y="6.2" width="6.8" height="1.1" fill="#2e2a28"/><path d="M5 9.6 Q8 12.6 11 9.6 L10.6 11.6 Q8 13.6 5.4 11.6 Z" fill="#3f2e24"/><path d="M2.5 16 Q3.5 12.8 8 12.8 Q12.5 12.8 13.5 16 Z" fill="#d8c2b0"/></g></svg>
<div class="t" style="left:1002.00px;top:382.00px;font-size:10.50px;line-height:10.50px;transform:scaleX(0.9293);color:#5b9ad8;">John Administrator</div>
<div class="r" style="left:1096.70px;top:379.90px;width:83.60px;height:17.50px;border:1px solid #e9e9e9;border-radius:9px;box-sizing:border-box;background:#fcfcfc;"></div>
<svg class="r" style="left:1103.60px;top:383.20px" width="13.50" height="10.50" viewBox="0 0 13.5 10.5"><path d="M3.5 0.6 H12.5 V7.9 H7.2" fill="none" stroke="#111" stroke-width="1.2"/><path d="M6.6 8.4 L9.2 5.8 L10.3 7.3 Z" fill="#111"/><circle cx="3.5" cy="4.5" r="1.85" fill="#111"/><path d="M0.2 9.9 Q0.4 7.1 3.5 7.1 Q6.6 7.1 6.8 9.9 Z" fill="#111"/></svg>
<div class="t" style="left:1122.80px;top:383.00px;font-size:10.50px;line-height:10.50px;transform:scaleX(0.8922);color:#5b9ad8;">0/4 Courses</div>
<div class="r" style="left:394.20px;top:398.30px;width:223.50px;height:19.20px;background:#eeeeee;"></div>
<div class="t" style="left:399.20px;top:402.00px;font-size:11.00px;line-height:11.00px;font-weight:bold;transform:scaleX(1.0096);color:#222;">Production line management</div>
<div class="r" style="left:598.20px;top:403.20px;width:9.20px;height:9.00px;border:1px solid #8a8a8a;border-radius:1.5px;box-sizing:border-box;background:linear-gradient(#fafafa,#e4e4e4);"></div>
<div class="r" style="left:601.00px;top:407.10px;width:4.40px;height:1.30px;background:#333;"></div>
<div class="r" style="left:619.00px;top:399.30px;width:47.00px;height:18.80px;background:#eeeeee;border-radius:4.5px;"></div>
<svg class="r" style="left:637.50px;top:407.50px" width="10.50" height="3.20" viewBox="0 0 10.5 3.2"><circle cx="1.4" cy="1.5" r="1.25" fill="#212529"/><circle cx="5.2" cy="1.5" r="1.25" fill="#212529"/><circle cx="9" cy="1.5" r="1.25" fill="#212529"/></svg>
<div class="r" style="left:667.20px;top:399.30px;width:31.60px;height:18.80px;background:#eeeeee;border-radius:4.5px;"></div>
<div class="r" style="left:682.00px;top:409.60px;width:3.00px;height:1.00px;background:#555;"></div>
<div class="r" style="left:700.30px;top:399.30px;width:32.40px;height:18.80px;background:rgb(184,221,175);border-radius:4.5px;"></div>
<div class="t" style="left:707.10px;top:405.00px;font-size:10.40px;line-height:10.40px;font-weight:bold;transform:scaleX(0.9284);color:#2b2b2b;">4.67</div>
<div class="r" style="left:733.97px;top:399.30px;width:32.40px;height:18.80px;background:#eeeeee;border-radius:4.5px;"></div>
<div class="t" style="left:740.77px;top:405.00px;font-size:10.40px;line-height:10.40px;font-weight:bold;transform:scaleX(0.9284);color:#3a3a3a;">0.00</div>
<div class="r" style="left:767.64px;top:399.30px;width:32.40px;height:18.80px;background:rgb(179,219,181);border-radius:4.5px;"></div>
<div class="t" style="left:771.49px;top:405.00px;font-size:10.40px;line-height:10.40px;font-weight:bold;transform:scaleX(0.9284);color:#2b2b2b;">100%</div>
<div class="r" style="left:801.31px;top:399.30px;width:32.40px;height:18.80px;background:rgb(184,221,175);border-radius:4.5px;"></div>
<div class="t" style="left:808.11px;top:405.00px;font-size:10.40px;line-height:10.40px;font-weight:bold;transform:scaleX(0.9284);color:#2b2b2b;">4.67</div>
<div class="r" style="left:834.98px;top:399.30px;width:32.40px;height:18.80px;background:rgb(179,219,181);border-radius:4.5px;"></div>
<div class="t" style="left:838.83px;top:405.00px;font-size:10.40px;line-height:10.40px;font-weight:bold;transform:scaleX(0.9284);color:#2b2b2b;">100%</div>
<div class="r" style="left:868.65px;top:399.30px;width:32.40px;height:18.80px;background:rgb(179,224,250);border-radius:4.5px;"></div>
<div class="t" style="left:875.45px;top:405.00px;font-size:10.40px;line-height:10.40px;font-weight:bold;transform:scaleX(0.9284);color:#2b2b2b;">3.00</div>
<div class="r" style="left:902.32px;top:399.30px;width:32.40px;height:18.80px;background:rgb(184,221,175);border-radius:4.5px;"></div>
<div class="t" style="left:909.12px;top:405.00px;font-size:10.40px;line-height:10.40px;font-weight:bold;transform:scaleX(0.9284);color:#2b2b2b;">4.67</div>
<div class="r" style="left:935.99px;top:399.30px;width:32.40px;height:18.80px;background:rgb(179,219,181);border-radius:4.5px;"></div>
<div class="t" style="left:939.84px;top:405.00px;font-size:10.40px;line-height:10.40px;font-weight:bold;transform:scaleX(0.9284);color:#2b2b2b;">100%</div>
<div class="r" style="left:969.70px;top:399.30px;width:125.40px;height:18.80px;background:#eeeeee;border-radius:5px;"></div>
<div class="r" style="left:1097.00px;top:399.30px;width:84.00px;height:18.80px;background:#eeeeee;border-radius:5px;"></div>
<div class="t" style="left:415.40px;top:422.00px;font-size:10.50px;line-height:10.50px;transform:scaleX(1.0690);color:#5b9ad8;">Production line allocation</div>
<svg class="r" style="left:637.60px;top:423.10px" width="9.60" height="9.60" viewBox="0 0 9.6 9.6"><circle cx="4.8" cy="4.8" r="4.75" fill="#f5b70a"/><rect x="4.05" y="2.1" width="1.5" height="3.3" rx="0.6" fill="#fff"/><circle cx="4.8" cy="7.1" r="0.85" fill="#fff"/></svg>
<div class="t" style="left:680.55px;top:424.00px;font-size:9.50px;line-height:9.50px;color:#444;">3</div>
<div class="r" style="left:700.30px;top:419.30px;width:32.40px;height:18.80px;background:rgb(179,219,181);border-radius:4.5px;"></div>
<div class="t" style="left:709.79px;top:425.00px;font-size:10.40px;line-height:10.40px;transform:scaleX(0.9284);color:#2b2b2b;">5.0</div>
<div class="t" style="left:747.48px;top:425.00px;font-size:10.40px;line-height:10.40px;transform:scaleX(0.9284);color:#3a3a3a;">0</div>
<div class="r" style="left:767.64px;top:419.30px;width:32.40px;height:18.80px;background:rgb(179,219,181);border-radius:4.5px;"></div>
<div class="t" style="left:771.49px;top:425.00px;font-size:10.40px;line-height:10.40px;transform:scaleX(0.9284);color:#2b2b2b;">100%</div>
<div class="r" style="left:801.31px;top:419.30px;width:32.40px;height:18.80px;background:rgb(179,219,181);border-radius:4.5px;"></div>
<div class="t" style="left:814.82px;top:425.00px;font-size:10.40px;line-height:10.40px;transform:scaleX(0.9284);color:#2b2b2b;">5</div>
<div class="r" style="left:834.98px;top:419.30px;width:32.40px;height:18.80px;background:rgb(179,219,181);border-radius:4.5px;"></div>
<div class="t" style="left:838.83px;top:425.00px;font-size:10.40px;line-height:10.40px;transform:scaleX(0.9284);color:#2b2b2b;">100%</div>
<div class="r" style="left:868.65px;top:419.30px;width:32.40px;height:18.80px;background:rgb(179,224,250);border-radius:4.5px;"></div>
<div class="t" style="left:882.16px;top:425.00px;font-size:10.40px;line-height:10.40px;transform:scaleX(0.9284);color:#2b2b2b;">3</div>
<div class="r" style="left:902.32px;top:419.30px;width:32.40px;height:18.80px;background:rgb(179,219,181);border-radius:4.5px;"></div>
<div class="t" style="left:915.83px;top:425.00px;font-size:10.40px;line-height:10.40px;transform:scaleX(0.9284);color:#2b2b2b;">5</div>
<div class="r" style="left:935.99px;top:419.30px;width:32.40px;height:18.80px;background:rgb(179,219,181);border-radius:4.5px;"></div>
<div class="t" style="left:939.84px;top:425.00px;font-size:10.40px;line-height:10.40px;transform:scaleX(0.9284);color:#2b2b2b;">100%</div>
<div class="r" style="left:976.00px;top:418.60px;width:113.00px;height:17.20px;border:1px solid #e9e9e9;border-radius:9px;box-sizing:border-box;background:#fcfcfc;"></div>
<svg class="r" style="left:983.00px;top:419.10px" width="16.00" height="16.00" viewBox="0 0 16 16"><defs><clipPath id="cp8"><circle cx="8" cy="8" r="7.8"/></clipPath></defs><g clip-path="url(#cp8)"><rect width="16" height="16" fill="#b4b8bd"/><path d="M11 4 Q14 6 16 9 V16 H10 Z" fill="#6f7174"/><path d="M4.4 7 Q4.3 2.8 8 2.6 Q11.7 2.8 11.6 7 L11.2 10.8 Q8 14 4.8 10.8 Z" fill="#c29a80"/><path d="M4.2 6.2 Q4.2 1.6 8 1.6 Q11.8 1.6 11.8 6.2 L11.2 4.6 Q8 3.3 4.8 4.6 Z" fill="#4a3628"/><rect x="4.6" y="6.2" width="6.8" height="1.1" fill="#2e2a28"/><path d="M5 9.6 Q8 12.6 11 9.6 L10.6 11.6 Q8 13.6 5.4 11.6 Z" fill="#3f2e24"/><path d="M2.5 16 Q3.5 12.8 8 12.8 Q12.5 12.8 13.5 16 Z" fill="#d8c2b0"/></g></svg>
<div class="t" style="left:1002.00px;top:422.00px;font-size:10.50px;line-height:10.50px;transform:scaleX(0.9293);color:#5b9ad8;">John Administrator</div>
<div class="r" style="left:1096.70px;top:419.90px;width:83.60px;height:17.50px;border:1px solid #e9e9e9;border-radius:9px;box-sizing:border-box;background:#fcfcfc;"></div>
<svg class="r" style="left:1103.60px;top:423.20px" width="13.50" height="10.50" viewBox="0 0 13.5 10.5"><path d="M3.5 0.6 H12.5 V7.9 H7.2" fill="none" stroke="#111" stroke-width="1.2"/><path d="M6.6 8.4 L9.2 5.8 L10.3 7.3 Z" fill="#111"/><circle cx="3.5" cy="4.5" r="1.85" fill="#111"/><path d="M0.2 9.9 Q0.4 7.1 3.5 7.1 Q6.6 7.1 6.8 9.9 Z" fill="#111"/></svg>
<div class="t" style="left:1122.80px;top:423.00px;font-size:10.50px;line-height:10.50px;transform:scaleX(0.8922);color:#5b9ad8;">0/4 Courses</div>
<div class="t" style="left:415.40px;top:442.00px;font-size:10.50px;line-height:10.50px;transform:scaleX(1.0678);color:#5b9ad8;">Production line design</div>
<svg class="r" style="left:637.60px;top:443.10px" width="9.60" height="9.60" viewBox="0 0 9.6 9.6"><circle cx="4.8" cy="4.8" r="4.75" fill="#f5b70a"/><rect x="4.05" y="2.1" width="1.5" height="3.3" rx="0.6" fill="#fff"/><circle cx="4.8" cy="7.1" r="0.85" fill="#fff"/></svg>
<div class="t" style="left:680.55px;top:444.00px;font-size:9.50px;line-height:9.50px;color:#444;">3</div>
<div class="r" style="left:700.30px;top:439.30px;width:32.40px;height:18.80px;background:rgb(186,222,172);border-radius:4.5px;"></div>
<div class="t" style="left:709.79px;top:445.00px;font-size:10.40px;line-height:10.40px;transform:scaleX(0.9284);color:#2b2b2b;">4.5</div>
<div class="t" style="left:745.88px;top:445.00px;font-size:10.40px;line-height:10.40px;transform:scaleX(0.9284);color:#e0334a;">-1</div>
<div class="r" style="left:767.64px;top:439.30px;width:32.40px;height:18.80px;background:rgb(179,219,181);border-radius:4.5px;"></div>
<div class="t" style="left:771.49px;top:445.00px;font-size:10.40px;line-height:10.40px;transform:scaleX(0.9284);color:#2b2b2b;">100%</div>
<div class="r" style="left:801.31px;top:439.30px;width:32.40px;height:18.80px;background:rgb(179,219,181);border-radius:4.5px;"></div>
<div class="t" style="left:814.82px;top:445.00px;font-size:10.40px;line-height:10.40px;transform:scaleX(0.9284);color:#2b2b2b;">5</div>
<div class="r" style="left:834.98px;top:439.30px;width:32.40px;height:18.80px;background:rgb(179,219,181);border-radius:4.5px;"></div>
<div class="t" style="left:838.83px;top:445.00px;font-size:10.40px;line-height:10.40px;transform:scaleX(0.9284);color:#2b2b2b;">100%</div>
<div class="r" style="left:868.65px;top:439.30px;width:32.40px;height:18.80px;background:rgb(179,224,250);border-radius:4.5px;"></div>
<div class="t" style="left:882.16px;top:445.00px;font-size:10.40px;line-height:10.40px;transform:scaleX(0.9284);color:#2b2b2b;">3</div>
<div class="r" style="left:902.32px;top:439.30px;width:32.40px;height:18.80px;background:rgb(194,224,162);border-radius:4.5px;"></div>
<div class="t" style="left:915.83px;top:445.00px;font-size:10.40px;line-height:10.40px;transform:scaleX(0.9284);color:#2b2b2b;">4</div>
<div class="r" style="left:935.99px;top:439.30px;width:32.40px;height:18.80px;background:rgb(179,219,181);border-radius:4.5px;"></div>
<div class="t" style="left:939.84px;top:445.00px;font-size:10.40px;line-height:10.40px;transform:scaleX(0.9284);color:#2b2b2b;">100%</div>
<div class="r" style="left:976.00px;top:438.60px;width:113.00px;height:17.20px;border:1px solid #e9e9e9;border-radius:9px;box-sizing:border-box;background:#fcfcfc;"></div>
<svg class="r" style="left:983.00px;top:439.10px" width="16.00" height="16.00" viewBox="0 0 16 16"><defs><clipPath id="cp9"><circle cx="8" cy="8" r="7.8"/></clipPath></defs><g clip-path="url(#cp9)"><rect width="16" height="16" fill="#b4b8bd"/><path d="M11 4 Q14 6 16 9 V16 H10 Z" fill="#6f7174"/><path d="M4.4 7 Q4.3 2.8 8 2.6 Q11.7 2.8 11.6 7 L11.2 10.8 Q8 14 4.8 10.8 Z" fill="#c29a80"/><path d="M4.2 6.2 Q4.2 1.6 8 1.6 Q11.8 1.6 11.8 6.2 L11.2 4.6 Q8 3.3 4.8 4.6 Z" fill="#4a3628"/><rect x="4.6" y="6.2" width="6.8" height="1.1" fill="#2e2a28"/><path d="M5 9.6 Q8 12.6 11 9.6 L10.6 11.6 Q8 13.6 5.4 11.6 Z" fill="#3f2e24"/><path d="M2.5 16 Q3.5 12.8 8 12.8 Q12.5 12.8 13.5 16 Z" fill="#d8c2b0"/></g></svg>
<div class="t" style="left:1002.00px;top:442.00px;font-size:10.50px;line-height:10.50px;transform:scaleX(0.9293);color:#5b9ad8;">John Administrator</div>
<div class="r" style="left:1096.70px;top:439.90px;width:83.60px;height:17.50px;border:1px solid #e9e9e9;border-radius:9px;box-sizing:border-box;background:#fcfcfc;"></div>
<svg class="r" style="left:1103.60px;top:443.20px" width="13.50" height="10.50" viewBox="0 0 13.5 10.5"><path d="M3.5 0.6 H12.5 V7.9 H7.2" fill="none" stroke="#111" stroke-width="1.2"/><path d="M6.6 8.4 L9.2 5.8 L10.3 7.3 Z" fill="#111"/><circle cx="3.5" cy="4.5" r="1.85" fill="#111"/><path d="M0.2 9.9 Q0.4 7.1 3.5 7.1 Q6.6 7.1 6.8 9.9 Z" fill="#111"/></svg>
<div class="t" style="left:1122.80px;top:443.00px;font-size:10.50px;line-height:10.50px;transform:scaleX(0.8922);color:#5b9ad8;">0/4 Courses</div>
<div class="t" style="left:415.40px;top:462.00px;font-size:10.50px;line-height:10.50px;transform:scaleX(1.0574);color:#5b9ad8;">Production line supervision</div>
<svg class="r" style="left:637.60px;top:463.10px" width="9.60" height="9.60" viewBox="0 0 9.6 9.6"><circle cx="4.8" cy="4.8" r="4.75" fill="#f5b70a"/><rect x="4.05" y="2.1" width="1.5" height="3.3" rx="0.6" fill="#fff"/><circle cx="4.8" cy="7.1" r="0.85" fill="#fff"/></svg>
<div class="t" style="left:680.55px;top:464.00px;font-size:9.50px;line-height:9.50px;color:#444;">3</div>
<div class="r" style="left:700.30px;top:459.30px;width:32.40px;height:18.80px;background:rgb(186,222,172);border-radius:4.5px;"></div>
<div class="t" style="left:709.79px;top:465.00px;font-size:10.40px;line-height:10.40px;transform:scaleX(0.9284);color:#2b2b2b;">4.5</div>
<div class="t" style="left:744.67px;top:465.00px;font-size:10.40px;line-height:10.40px;transform:scaleX(0.9284);color:#43a047;">+1</div>
<div class="r" style="left:767.64px;top:459.30px;width:32.40px;height:18.80px;background:rgb(179,219,181);border-radius:4.5px;"></div>
<div class="t" style="left:771.49px;top:465.00px;font-size:10.40px;line-height:10.40px;transform:scaleX(0.9284);color:#2b2b2b;">100%</div>
<div class="r" style="left:801.31px;top:459.30px;width:32.40px;height:18.80px;background:rgb(194,224,162);border-radius:4.5px;"></div>
<div class="t" style="left:814.82px;top:465.00px;font-size:10.40px;line-height:10.40px;transform:scaleX(0.9284);color:#2b2b2b;">4</div>
<div class="r" style="left:834.98px;top:459.30px;width:32.40px;height:18.80px;background:rgb(179,219,181);border-radius:4.5px;"></div>
<div class="t" style="left:838.83px;top:465.00px;font-size:10.40px;line-height:10.40px;transform:scaleX(0.9284);color:#2b2b2b;">100%</div>
<div class="r" style="left:868.65px;top:459.30px;width:32.40px;height:18.80px;background:rgb(179,224,250);border-radius:4.5px;"></div>
<div class="t" style="left:882.16px;top:465.00px;font-size:10.40px;line-height:10.40px;transform:scaleX(0.9284);color:#2b2b2b;">3</div>
<div class="r" style="left:902.32px;top:459.30px;width:32.40px;height:18.80px;background:rgb(179,219,181);border-radius:4.5px;"></div>
<div class="t" style="left:915.83px;top:465.00px;font-size:10.40px;line-height:10.40px;transform:scaleX(0.9284);color:#2b2b2b;">5</div>
<div class="r" style="left:935.99px;top:459.30px;width:32.40px;height:18.80px;background:rgb(179,219,181);border-radius:4.5px;"></div>
<div class="t" style="left:939.84px;top:465.00px;font-size:10.40px;line-height:10.40px;transform:scaleX(0.9284);color:#2b2b2b;">100%</div>
<div class="r" style="left:976.00px;top:458.60px;width:113.00px;height:17.20px;border:1px solid #e9e9e9;border-radius:9px;box-sizing:border-box;background:#fcfcfc;"></div>
<svg class="r" style="left:983.00px;top:459.10px" width="16.00" height="16.00" viewBox="0 0 16 16"><defs><clipPath id="cp10"><circle cx="8" cy="8" r="7.8"/></clipPath></defs><g clip-path="url(#cp10)"><rect width="16" height="16" fill="#b4b8bd"/><path d="M11 4 Q14 6 16 9 V16 H10 Z" fill="#6f7174"/><path d="M4.4 7 Q4.3 2.8 8 2.6 Q11.7 2.8 11.6 7 L11.2 10.8 Q8 14 4.8 10.8 Z" fill="#c29a80"/><path d="M4.2 6.2 Q4.2 1.6 8 1.6 Q11.8 1.6 11.8 6.2 L11.2 4.6 Q8 3.3 4.8 4.6 Z" fill="#4a3628"/><rect x="4.6" y="6.2" width="6.8" height="1.1" fill="#2e2a28"/><path d="M5 9.6 Q8 12.6 11 9.6 L10.6 11.6 Q8 13.6 5.4 11.6 Z" fill="#3f2e24"/><path d="M2.5 16 Q3.5 12.8 8 12.8 Q12.5 12.8 13.5 16 Z" fill="#d8c2b0"/></g></svg>
<div class="t" style="left:1002.00px;top:462.00px;font-size:10.50px;line-height:10.50px;transform:scaleX(0.9293);color:#5b9ad8;">John Administrator</div>
<div class="r" style="left:1096.70px;top:459.90px;width:83.60px;height:17.50px;border:1px solid #e9e9e9;border-radius:9px;box-sizing:border-box;background:#fcfcfc;"></div>
<svg class="r" style="left:1103.60px;top:463.20px" width="13.50" height="10.50" viewBox="0 0 13.5 10.5"><path d="M3.5 0.6 H12.5 V7.9 H7.2" fill="none" stroke="#111" stroke-width="1.2"/><path d="M6.6 8.4 L9.2 5.8 L10.3 7.3 Z" fill="#111"/><circle cx="3.5" cy="4.5" r="1.85" fill="#111"/><path d="M0.2 9.9 Q0.4 7.1 3.5 7.1 Q6.6 7.1 6.8 9.9 Z" fill="#111"/></svg>
<div class="t" style="left:1122.80px;top:463.00px;font-size:10.50px;line-height:10.50px;transform:scaleX(0.8922);color:#5b9ad8;">0/4 Courses</div>
<div class="r" style="left:394.20px;top:478.30px;width:223.50px;height:19.20px;background:#eeeeee;"></div>
<div class="t" style="left:399.20px;top:482.00px;font-size:11.00px;line-height:11.00px;font-weight:bold;transform:scaleX(1.0086);color:#222;">Production line operation</div>
<div class="r" style="left:598.20px;top:483.20px;width:9.20px;height:9.00px;border:1px solid #8a8a8a;border-radius:1.5px;box-sizing:border-box;background:linear-gradient(#fafafa,#e4e4e4);"></div>
<div class="r" style="left:601.00px;top:487.10px;width:4.40px;height:1.30px;background:#333;"></div>
<div class="r" style="left:619.00px;top:479.30px;width:47.00px;height:18.80px;background:#eeeeee;border-radius:4.5px;"></div>
<svg class="r" style="left:637.50px;top:487.50px" width="10.50" height="3.20" viewBox="0 0 10.5 3.2"><circle cx="1.4" cy="1.5" r="1.25" fill="#212529"/><circle cx="5.2" cy="1.5" r="1.25" fill="#212529"/><circle cx="9" cy="1.5" r="1.25" fill="#212529"/></svg>
<div class="r" style="left:667.20px;top:479.30px;width:31.60px;height:18.80px;background:#eeeeee;border-radius:4.5px;"></div>
<div class="r" style="left:682.00px;top:489.60px;width:3.00px;height:1.00px;background:#555;"></div>
<div class="r" style="left:700.30px;top:479.30px;width:32.40px;height:18.80px;background:rgb(215,226,154);border-radius:4.5px;"></div>
<div class="t" style="left:707.10px;top:485.00px;font-size:10.40px;line-height:10.40px;font-weight:bold;transform:scaleX(0.9284);color:#2b2b2b;">3.25</div>
<div class="r" style="left:733.97px;top:479.30px;width:32.40px;height:18.80px;background:#eeeeee;border-radius:4.5px;"></div>
<div class="t" style="left:737.96px;top:485.00px;font-size:10.40px;line-height:10.40px;font-weight:bold;transform:scaleX(0.9284);color:#43a047;">+1.00</div>
<div class="r" style="left:767.64px;top:479.30px;width:32.40px;height:18.80px;background:rgb(189,222,169);border-radius:4.5px;"></div>
<div class="t" style="left:774.18px;top:485.00px;font-size:10.40px;line-height:10.40px;font-weight:bold;transform:scaleX(0.9284);color:#2b2b2b;">84%</div>
<div class="r" style="left:801.31px;top:479.30px;width:32.40px;height:18.80px;background:rgb(222,227,152);border-radius:4.5px;"></div>
<div class="t" style="left:808.11px;top:485.00px;font-size:10.40px;line-height:10.40px;font-weight:bold;transform:scaleX(0.9284);color:#2b2b2b;">3.00</div>
<div class="r" style="left:834.98px;top:479.30px;width:32.40px;height:18.80px;background:rgb(189,222,169);border-radius:4.5px;"></div>
<div class="t" style="left:841.52px;top:485.00px;font-size:10.40px;line-height:10.40px;font-weight:bold;transform:scaleX(0.9284);color:#2b2b2b;">84%</div>
<div class="r" style="left:868.65px;top:479.30px;width:32.40px;height:18.80px;background:rgb(190,228,250);border-radius:4.5px;"></div>
<div class="t" style="left:875.45px;top:485.00px;font-size:10.40px;line-height:10.40px;font-weight:bold;transform:scaleX(0.9284);color:#2b2b2b;">2.50</div>
<div class="r" style="left:902.32px;top:479.30px;width:32.40px;height:18.80px;background:rgb(208,226,157);border-radius:4.5px;"></div>
<div class="t" style="left:909.12px;top:485.00px;font-size:10.40px;line-height:10.40px;font-weight:bold;transform:scaleX(0.9284);color:#2b2b2b;">3.50</div>
<div class="r" style="left:935.99px;top:479.30px;width:32.40px;height:18.80px;background:rgb(189,222,169);border-radius:4.5px;"></div>
<div class="t" style="left:942.53px;top:485.00px;font-size:10.40px;line-height:10.40px;font-weight:bold;transform:scaleX(0.9284);color:#2b2b2b;">84%</div>
<div class="r" style="left:969.70px;top:479.30px;width:125.40px;height:18.80px;background:#eeeeee;border-radius:5px;"></div>
<div class="r" style="left:1097.00px;top:479.30px;width:84.00px;height:18.80px;background:#eeeeee;border-radius:5px;"></div>
<div class="t" style="left:415.40px;top:502.00px;font-size:10.50px;line-height:10.50px;transform:scaleX(1.0964);color:#5b9ad8;">Operation Monitoring</div>
<svg class="r" style="left:637.60px;top:503.10px" width="9.60" height="9.60" viewBox="0 0 9.6 9.6"><circle cx="4.8" cy="4.8" r="4.75" fill="#f5b70a"/><rect x="4.05" y="2.1" width="1.5" height="3.3" rx="0.6" fill="#fff"/><circle cx="4.8" cy="7.1" r="0.85" fill="#fff"/></svg>
<div class="t" style="left:680.55px;top:504.00px;font-size:9.50px;line-height:9.50px;color:#444;">3</div>
<div class="r" style="left:700.30px;top:499.30px;width:32.40px;height:18.80px;background:rgb(228,184,136);border-radius:4.5px;"></div>
<div class="t" style="left:709.79px;top:505.00px;font-size:10.40px;line-height:10.40px;transform:scaleX(0.9284);color:#2b2b2b;">2.0</div>
<div class="t" style="left:747.48px;top:505.00px;font-size:10.40px;line-height:10.40px;transform:scaleX(0.9284);color:#3a3a3a;">0</div>
<div class="r" style="left:767.64px;top:499.30px;width:32.40px;height:18.80px;background:rgb(203,225,159);border-radius:4.5px;"></div>
<div class="t" style="left:774.18px;top:505.00px;font-size:10.40px;line-height:10.40px;transform:scaleX(0.9284);color:#2b2b2b;">67%</div>
<div class="r" style="left:801.31px;top:499.30px;width:32.40px;height:18.80px;background:rgb(228,184,136);border-radius:4.5px;"></div>
<div class="t" style="left:814.82px;top:505.00px;font-size:10.40px;line-height:10.40px;transform:scaleX(0.9284);color:#2b2b2b;">2</div>
<div class="r" style="left:834.98px;top:499.30px;width:32.40px;height:18.80px;background:rgb(203,225,159);border-radius:4.5px;"></div>
<div class="t" style="left:841.52px;top:505.00px;font-size:10.40px;line-height:10.40px;transform:scaleX(0.9284);color:#2b2b2b;">67%</div>
<div class="r" style="left:868.65px;top:499.30px;width:32.40px;height:18.80px;background:rgb(201,232,251);border-radius:4.5px;"></div>
<div class="t" style="left:882.16px;top:505.00px;font-size:10.40px;line-height:10.40px;transform:scaleX(0.9284);color:#2b2b2b;">2</div>
<div class="r" style="left:902.32px;top:499.30px;width:32.40px;height:18.80px;background:rgb(228,184,136);border-radius:4.5px;"></div>
<div class="t" style="left:915.83px;top:505.00px;font-size:10.40px;line-height:10.40px;transform:scaleX(0.9284);color:#2b2b2b;">2</div>
<div class="r" style="left:935.99px;top:499.30px;width:32.40px;height:18.80px;background:rgb(203,225,159);border-radius:4.5px;"></div>
<div class="t" style="left:942.53px;top:505.00px;font-size:10.40px;line-height:10.40px;transform:scaleX(0.9284);color:#2b2b2b;">67%</div>
<div class="r" style="left:976.00px;top:498.60px;width:113.00px;height:17.20px;border:1px solid #e9e9e9;border-radius:9px;box-sizing:border-box;background:#fcfcfc;"></div>
<svg class="r" style="left:983.00px;top:499.10px" width="16.00" height="16.00" viewBox="0 0 16 16"><defs><clipPath id="cp12"><circle cx="8" cy="8" r="7.8"/></clipPath></defs><g clip-path="url(#cp12)"><rect width="16" height="16" fill="#b4b8bd"/><path d="M11 4 Q14 6 16 9 V16 H10 Z" fill="#6f7174"/><path d="M4.4 7 Q4.3 2.8 8 2.6 Q11.7 2.8 11.6 7 L11.2 10.8 Q8 14 4.8 10.8 Z" fill="#c29a80"/><path d="M4.2 6.2 Q4.2 1.6 8 1.6 Q11.8 1.6 11.8 6.2 L11.2 4.6 Q8 3.3 4.8 4.6 Z" fill="#4a3628"/><rect x="4.6" y="6.2" width="6.8" height="1.1" fill="#2e2a28"/><path d="M5 9.6 Q8 12.6 11 9.6 L10.6 11.6 Q8 13.6 5.4 11.6 Z" fill="#3f2e24"/><path d="M2.5 16 Q3.5 12.8 8 12.8 Q12.5 12.8 13.5 16 Z" fill="#d8c2b0"/></g></svg>
<div class="t" style="left:1002.00px;top:502.00px;font-size:10.50px;line-height:10.50px;transform:scaleX(0.9293);color:#5b9ad8;">John Administrator</div>
<div class="r" style="left:1096.70px;top:499.90px;width:83.60px;height:17.50px;border:1px solid #e9e9e9;border-radius:9px;box-sizing:border-box;background:#fcfcfc;"></div>
<svg class="r" style="left:1103.60px;top:503.20px" width="13.50" height="10.50" viewBox="0 0 13.5 10.5"><path d="M3.5 0.6 H12.5 V7.9 H7.2" fill="none" stroke="#111" stroke-width="1.2"/><path d="M6.6 8.4 L9.2 5.8 L10.3 7.3 Z" fill="#111"/><circle cx="3.5" cy="4.5" r="1.85" fill="#111"/><path d="M0.2 9.9 Q0.4 7.1 3.5 7.1 Q6.6 7.1 6.8 9.9 Z" fill="#111"/></svg>
<div class="t" style="left:1122.80px;top:503.00px;font-size:10.50px;line-height:10.50px;transform:scaleX(0.8922);color:#5b9ad8;">0/4 Courses</div>
<div class="t" style="left:415.40px;top:522.00px;font-size:10.50px;line-height:10.50px;transform:scaleX(1.0505);color:#5b9ad8;">Quality Control Analysis</div>
<svg class="r" style="left:637.60px;top:523.10px" width="9.60" height="9.60" viewBox="0 0 9.6 9.6"><circle cx="4.8" cy="4.8" r="4.75" fill="#f5b70a"/><rect x="4.05" y="2.1" width="1.5" height="3.3" rx="0.6" fill="#fff"/><circle cx="4.8" cy="7.1" r="0.85" fill="#fff"/></svg>
<div class="t" style="left:680.55px;top:524.00px;font-size:9.50px;line-height:9.50px;color:#444;">3</div>
<div class="r" style="left:700.30px;top:519.30px;width:32.40px;height:18.80px;background:rgb(186,222,172);border-radius:4.5px;"></div>
<div class="t" style="left:709.79px;top:525.00px;font-size:10.40px;line-height:10.40px;transform:scaleX(0.9284);color:#2b2b2b;">4.5</div>
<div class="t" style="left:744.67px;top:525.00px;font-size:10.40px;line-height:10.40px;transform:scaleX(0.9284);color:#43a047;">+1</div>
<div class="r" style="left:767.64px;top:519.30px;width:32.40px;height:18.80px;background:rgb(179,219,181);border-radius:4.5px;"></div>
<div class="t" style="left:771.49px;top:525.00px;font-size:10.40px;line-height:10.40px;transform:scaleX(0.9284);color:#2b2b2b;">100%</div>
<div class="r" style="left:801.31px;top:519.30px;width:32.40px;height:18.80px;background:rgb(194,224,162);border-radius:4.5px;"></div>
<div class="t" style="left:814.82px;top:525.00px;font-size:10.40px;line-height:10.40px;transform:scaleX(0.9284);color:#2b2b2b;">4</div>
<div class="r" style="left:834.98px;top:519.30px;width:32.40px;height:18.80px;background:rgb(179,219,181);border-radius:4.5px;"></div>
<div class="t" style="left:838.83px;top:525.00px;font-size:10.40px;line-height:10.40px;transform:scaleX(0.9284);color:#2b2b2b;">100%</div>
<div class="r" style="left:868.65px;top:519.30px;width:32.40px;height:18.80px;background:rgb(179,224,250);border-radius:4.5px;"></div>
<div class="t" style="left:882.16px;top:525.00px;font-size:10.40px;line-height:10.40px;transform:scaleX(0.9284);color:#2b2b2b;">3</div>
<div class="r" style="left:902.32px;top:519.30px;width:32.40px;height:18.80px;background:rgb(179,219,181);border-radius:4.5px;"></div>
<div class="t" style="left:915.83px;top:525.00px;font-size:10.40px;line-height:10.40px;transform:scaleX(0.9284);color:#2b2b2b;">5</div>
<div class="r" style="left:935.99px;top:519.30px;width:32.40px;height:18.80px;background:rgb(179,219,181);border-radius:4.5px;"></div>
<div class="t" style="left:939.84px;top:525.00px;font-size:10.40px;line-height:10.40px;transform:scaleX(0.9284);color:#2b2b2b;">100%</div>
<div class="r" style="left:976.00px;top:518.60px;width:113.00px;height:17.20px;border:1px solid #e9e9e9;border-radius:9px;box-sizing:border-box;background:#fcfcfc;"></div>
<svg class="r" style="left:983.00px;top:519.10px" width="16.00" height="16.00" viewBox="0 0 16 16"><defs><clipPath id="cp13"><circle cx="8" cy="8" r="7.8"/></clipPath></defs><g clip-path="url(#cp13)"><rect width="16" height="16" fill="#b4b8bd"/><path d="M11 4 Q14 6 16 9 V16 H10 Z" fill="#6f7174"/><path d="M4.4 7 Q4.3 2.8 8 2.6 Q11.7 2.8 11.6 7 L11.2 10.8 Q8 14 4.8 10.8 Z" fill="#c29a80"/><path d="M4.2 6.2 Q4.2 1.6 8 1.6 Q11.8 1.6 11.8 6.2 L11.2 4.6 Q8 3.3 4.8 4.6 Z" fill="#4a3628"/><rect x="4.6" y="6.2" width="6.8" height="1.1" fill="#2e2a28"/><path d="M5 9.6 Q8 12.6 11 9.6 L10.6 11.6 Q8 13.6 5.4 11.6 Z" fill="#3f2e24"/><path d="M2.5 16 Q3.5 12.8 8 12.8 Q12.5 12.8 13.5 16 Z" fill="#d8c2b0"/></g></svg>
<div class="t" style="left:1002.00px;top:522.00px;font-size:10.50px;line-height:10.50px;transform:scaleX(0.9293);color:#5b9ad8;">John Administrator</div>
<div class="r" style="left:1096.70px;top:519.90px;width:83.60px;height:17.50px;border:1px solid #e9e9e9;border-radius:9px;box-sizing:border-box;background:#fcfcfc;"></div>
<svg class="r" style="left:1103.60px;top:523.20px" width="13.50" height="10.50" viewBox="0 0 13.5 10.5"><path d="M3.5 0.6 H12.5 V7.9 H7.2" fill="none" stroke="#111" stroke-width="1.2"/><path d="M6.6 8.4 L9.2 5.8 L10.3 7.3 Z" fill="#111"/><circle cx="3.5" cy="4.5" r="1.85" fill="#111"/><path d="M0.2 9.9 Q0.4 7.1 3.5 7.1 Q6.6 7.1 6.8 9.9 Z" fill="#111"/></svg>
<div class="t" style="left:1122.80px;top:523.00px;font-size:10.50px;line-height:10.50px;transform:scaleX(0.8922);color:#5b9ad8;">0/4 Courses</div>
<div class="r" style="left:394.20px;top:538.30px;width:223.50px;height:19.20px;background:#eeeeee;"></div>
<div class="t" style="left:399.20px;top:542.00px;font-size:11.00px;line-height:11.00px;font-weight:bold;color:#222;">Workplace safety</div>
<div class="r" style="left:598.20px;top:543.20px;width:9.20px;height:9.00px;border:1px solid #8a8a8a;border-radius:1.5px;box-sizing:border-box;background:linear-gradient(#fafafa,#e4e4e4);"></div>
<div class="r" style="left:601.00px;top:547.10px;width:4.40px;height:1.30px;background:#333;"></div>
<div class="r" style="left:619.00px;top:539.30px;width:47.00px;height:18.80px;background:#eeeeee;border-radius:4.5px;"></div>
<svg class="r" style="left:637.50px;top:547.50px" width="10.50" height="3.20" viewBox="0 0 10.5 3.2"><circle cx="1.4" cy="1.5" r="1.25" fill="#212529"/><circle cx="5.2" cy="1.5" r="1.25" fill="#212529"/><circle cx="9" cy="1.5" r="1.25" fill="#212529"/></svg>
<div class="r" style="left:667.20px;top:539.30px;width:31.60px;height:18.80px;background:#eeeeee;border-radius:4.5px;"></div>
<div class="r" style="left:682.00px;top:549.60px;width:3.00px;height:1.00px;background:#555;"></div>
<div class="r" style="left:700.30px;top:539.30px;width:32.40px;height:18.80px;background:rgb(199,225,160);border-radius:4.5px;"></div>
<div class="t" style="left:707.10px;top:545.00px;font-size:10.40px;line-height:10.40px;font-weight:bold;transform:scaleX(0.9284);color:#2b2b2b;">3.83</div>
<div class="r" style="left:733.97px;top:539.30px;width:32.40px;height:18.80px;background:#eeeeee;border-radius:4.5px;"></div>
<div class="t" style="left:739.17px;top:545.00px;font-size:10.40px;line-height:10.40px;font-weight:bold;transform:scaleX(0.9284);color:#e0334a;">-0.33</div>
<div class="r" style="left:767.64px;top:539.30px;width:32.40px;height:18.80px;background:rgb(179,219,181);border-radius:4.5px;"></div>
<div class="t" style="left:771.49px;top:545.00px;font-size:10.40px;line-height:10.40px;font-weight:bold;transform:scaleX(0.9284);color:#2b2b2b;">100%</div>
<div class="r" style="left:801.31px;top:539.30px;width:32.40px;height:18.80px;background:rgb(194,224,162);border-radius:4.5px;"></div>
<div class="t" style="left:808.11px;top:545.00px;font-size:10.40px;line-height:10.40px;font-weight:bold;transform:scaleX(0.9284);color:#2b2b2b;">4.00</div>
<div class="r" style="left:834.98px;top:539.30px;width:32.40px;height:18.80px;background:rgb(179,219,181);border-radius:4.5px;"></div>
<div class="t" style="left:838.83px;top:545.00px;font-size:10.40px;line-height:10.40px;font-weight:bold;transform:scaleX(0.9284);color:#2b2b2b;">100%</div>
<div class="r" style="left:868.65px;top:539.30px;width:32.40px;height:18.80px;background:rgb(179,224,250);border-radius:4.5px;"></div>
<div class="t" style="left:875.45px;top:545.00px;font-size:10.40px;line-height:10.40px;font-weight:bold;transform:scaleX(0.9284);color:#2b2b2b;">3.00</div>
<div class="r" style="left:902.32px;top:539.30px;width:32.40px;height:18.80px;background:rgb(203,225,159);border-radius:4.5px;"></div>
<div class="t" style="left:909.12px;top:545.00px;font-size:10.40px;line-height:10.40px;font-weight:bold;transform:scaleX(0.9284);color:#2b2b2b;">3.67</div>
<div class="r" style="left:935.99px;top:539.30px;width:32.40px;height:18.80px;background:rgb(179,219,181);border-radius:4.5px;"></div>
<div class="t" style="left:939.84px;top:545.00px;font-size:10.40px;line-height:10.40px;font-weight:bold;transform:scaleX(0.9284);color:#2b2b2b;">100%</div>
<div class="r" style="left:969.70px;top:539.30px;width:125.40px;height:18.80px;background:#eeeeee;border-radius:5px;"></div>
<div class="r" style="left:1097.00px;top:539.30px;width:84.00px;height:18.80px;background:#eeeeee;border-radius:5px;"></div>
<div class="t" style="left:415.40px;top:562.00px;font-size:10.50px;line-height:10.50px;transform:scaleX(1.0571);color:#5b9ad8;">Identify hazardous situations</div>
<svg class="r" style="left:637.60px;top:563.10px" width="9.60" height="9.60" viewBox="0 0 9.6 9.6"><circle cx="4.8" cy="4.8" r="4.75" fill="#f5b70a"/><rect x="4.05" y="2.1" width="1.5" height="3.3" rx="0.6" fill="#fff"/><circle cx="4.8" cy="7.1" r="0.85" fill="#fff"/></svg>
<div class="t" style="left:680.55px;top:564.00px;font-size:9.50px;line-height:9.50px;color:#444;">3</div>
<div class="r" style="left:700.30px;top:559.30px;width:32.40px;height:18.80px;background:rgb(208,226,157);border-radius:4.5px;"></div>
<div class="t" style="left:709.79px;top:565.00px;font-size:10.40px;line-height:10.40px;transform:scaleX(0.9284);color:#2b2b2b;">3.5</div>
<div class="t" style="left:744.67px;top:565.00px;font-size:10.40px;line-height:10.40px;transform:scaleX(0.9284);color:#43a047;">+1</div>
<div class="r" style="left:767.64px;top:559.30px;width:32.40px;height:18.80px;background:rgb(179,219,181);border-radius:4.5px;"></div>
<div class="t" style="left:771.49px;top:565.00px;font-size:10.40px;line-height:10.40px;transform:scaleX(0.9284);color:#2b2b2b;">100%</div>
<div class="r" style="left:801.31px;top:559.30px;width:32.40px;height:18.80px;background:rgb(222,227,152);border-radius:4.5px;"></div>
<div class="t" style="left:814.82px;top:565.00px;font-size:10.40px;line-height:10.40px;transform:scaleX(0.9284);color:#2b2b2b;">3</div>
<div class="r" style="left:834.98px;top:559.30px;width:32.40px;height:18.80px;background:rgb(179,219,181);border-radius:4.5px;"></div>
<div class="t" style="left:838.83px;top:565.00px;font-size:10.40px;line-height:10.40px;transform:scaleX(0.9284);color:#2b2b2b;">100%</div>
<div class="r" style="left:868.65px;top:559.30px;width:32.40px;height:18.80px;background:rgb(143,208,248);border-radius:4.5px;"></div>
<div class="t" style="left:882.16px;top:565.00px;font-size:10.40px;line-height:10.40px;transform:scaleX(0.9284);color:#2b2b2b;">4</div>
<div class="r" style="left:902.32px;top:559.30px;width:32.40px;height:18.80px;background:rgb(194,224,162);border-radius:4.5px;"></div>
<div class="t" style="left:915.83px;top:565.00px;font-size:10.40px;line-height:10.40px;transform:scaleX(0.9284);color:#2b2b2b;">4</div>
<div class="r" style="left:935.99px;top:559.30px;width:32.40px;height:18.80px;background:rgb(179,219,181);border-radius:4.5px;"></div>
<div class="t" style="left:939.84px;top:565.00px;font-size:10.40px;line-height:10.40px;transform:scaleX(0.9284);color:#2b2b2b;">100%</div>
<div class="r" style="left:976.00px;top:558.60px;width:113.00px;height:17.20px;border:1px solid #e9e9e9;border-radius:9px;box-sizing:border-box;background:#fcfcfc;"></div>
<svg class="r" style="left:983.00px;top:559.10px" width="16.00" height="16.00" viewBox="0 0 16 16"><defs><clipPath id="cp15"><circle cx="8" cy="8" r="7.8"/></clipPath></defs><g clip-path="url(#cp15)"><rect width="16" height="16" fill="#b4b8bd"/><path d="M11 4 Q14 6 16 9 V16 H10 Z" fill="#6f7174"/><path d="M4.4 7 Q4.3 2.8 8 2.6 Q11.7 2.8 11.6 7 L11.2 10.8 Q8 14 4.8 10.8 Z" fill="#c29a80"/><path d="M4.2 6.2 Q4.2 1.6 8 1.6 Q11.8 1.6 11.8 6.2 L11.2 4.6 Q8 3.3 4.8 4.6 Z" fill="#4a3628"/><rect x="4.6" y="6.2" width="6.8" height="1.1" fill="#2e2a28"/><path d="M5 9.6 Q8 12.6 11 9.6 L10.6 11.6 Q8 13.6 5.4 11.6 Z" fill="#3f2e24"/><path d="M2.5 16 Q3.5 12.8 8 12.8 Q12.5 12.8 13.5 16 Z" fill="#d8c2b0"/></g></svg>
<div class="t" style="left:1002.00px;top:562.00px;font-size:10.50px;line-height:10.50px;transform:scaleX(0.9293);color:#5b9ad8;">John Administrator</div>
<div class="r" style="left:1096.70px;top:559.90px;width:83.60px;height:17.50px;border:1px solid #e9e9e9;border-radius:9px;box-sizing:border-box;background:#fcfcfc;"></div>
<svg class="r" style="left:1103.60px;top:563.20px" width="13.50" height="10.50" viewBox="0 0 13.5 10.5"><path d="M3.5 0.6 H12.5 V7.9 H7.2" fill="none" stroke="#111" stroke-width="1.2"/><path d="M6.6 8.4 L9.2 5.8 L10.3 7.3 Z" fill="#111"/><circle cx="3.5" cy="4.5" r="1.85" fill="#111"/><path d="M0.2 9.9 Q0.4 7.1 3.5 7.1 Q6.6 7.1 6.8 9.9 Z" fill="#111"/></svg>
<div class="t" style="left:1122.80px;top:563.00px;font-size:10.50px;line-height:10.50px;transform:scaleX(0.8922);color:#5b9ad8;">0/4 Courses</div>
<div class="t" style="left:415.40px;top:582.00px;font-size:10.50px;line-height:10.50px;transform:scaleX(1.0481);color:#5b9ad8;">Manage hazardous situations</div>
<svg class="r" style="left:637.60px;top:583.10px" width="9.60" height="9.60" viewBox="0 0 9.6 9.6"><circle cx="4.8" cy="4.8" r="4.75" fill="#f5b70a"/><rect x="4.05" y="2.1" width="1.5" height="3.3" rx="0.6" fill="#fff"/><circle cx="4.8" cy="7.1" r="0.85" fill="#fff"/></svg>
<div class="t" style="left:680.55px;top:584.00px;font-size:9.50px;line-height:9.50px;color:#444;">3</div>
<div class="r" style="left:700.30px;top:579.30px;width:32.40px;height:18.80px;background:rgb(208,226,157);border-radius:4.5px;"></div>
<div class="t" style="left:709.79px;top:585.00px;font-size:10.40px;line-height:10.40px;transform:scaleX(0.9284);color:#2b2b2b;">3.5</div>
<div class="t" style="left:745.88px;top:585.00px;font-size:10.40px;line-height:10.40px;transform:scaleX(0.9284);color:#e0334a;">-1</div>
<div class="r" style="left:767.64px;top:579.30px;width:32.40px;height:18.80px;background:rgb(179,219,181);border-radius:4.5px;"></div>
<div class="t" style="left:771.49px;top:585.00px;font-size:10.40px;line-height:10.40px;transform:scaleX(0.9284);color:#2b2b2b;">100%</div>
<div class="r" style="left:801.31px;top:579.30px;width:32.40px;height:18.80px;background:rgb(194,224,162);border-radius:4.5px;"></div>
<div class="t" style="left:814.82px;top:585.00px;font-size:10.40px;line-height:10.40px;transform:scaleX(0.9284);color:#2b2b2b;">4</div>
<div class="r" style="left:834.98px;top:579.30px;width:32.40px;height:18.80px;background:rgb(179,219,181);border-radius:4.5px;"></div>
<div class="t" style="left:838.83px;top:585.00px;font-size:10.40px;line-height:10.40px;transform:scaleX(0.9284);color:#2b2b2b;">100%</div>
<div class="r" style="left:868.65px;top:579.30px;width:32.40px;height:18.80px;background:rgb(179,224,250);border-radius:4.5px;"></div>
<div class="t" style="left:882.16px;top:585.00px;font-size:10.40px;line-height:10.40px;transform:scaleX(0.9284);color:#2b2b2b;">3</div>
<div class="r" style="left:902.32px;top:579.30px;width:32.40px;height:18.80px;background:rgb(222,227,152);border-radius:4.5px;"></div>
<div class="t" style="left:915.83px;top:585.00px;font-size:10.40px;line-height:10.40px;transform:scaleX(0.9284);color:#2b2b2b;">3</div>
<div class="r" style="left:935.99px;top:579.30px;width:32.40px;height:18.80px;background:rgb(179,219,181);border-radius:4.5px;"></div>
<div class="t" style="left:939.84px;top:585.00px;font-size:10.40px;line-height:10.40px;transform:scaleX(0.9284);color:#2b2b2b;">100%</div>
<div class="r" style="left:976.00px;top:578.60px;width:113.00px;height:17.20px;border:1px solid #e9e9e9;border-radius:9px;box-sizing:border-box;background:#fcfcfc;"></div>
<svg class="r" style="left:983.00px;top:579.10px" width="16.00" height="16.00" viewBox="0 0 16 16"><defs><clipPath id="cp16"><circle cx="8" cy="8" r="7.8"/></clipPath></defs><g clip-path="url(#cp16)"><rect width="16" height="16" fill="#b4b8bd"/><path d="M11 4 Q14 6 16 9 V16 H10 Z" fill="#6f7174"/><path d="M4.4 7 Q4.3 2.8 8 2.6 Q11.7 2.8 11.6 7 L11.2 10.8 Q8 14 4.8 10.8 Z" fill="#c29a80"/><path d="M4.2 6.2 Q4.2 1.6 8 1.6 Q11.8 1.6 11.8 6.2 L11.2 4.6 Q8 3.3 4.8 4.6 Z" fill="#4a3628"/><rect x="4.6" y="6.2" width="6.8" height="1.1" fill="#2e2a28"/><path d="M5 9.6 Q8 12.6 11 9.6 L10.6 11.6 Q8 13.6 5.4 11.6 Z" fill="#3f2e24"/><path d="M2.5 16 Q3.5 12.8 8 12.8 Q12.5 12.8 13.5 16 Z" fill="#d8c2b0"/></g></svg>
<div class="t" style="left:1002.00px;top:582.00px;font-size:10.50px;line-height:10.50px;transform:scaleX(0.9293);color:#5b9ad8;">John Administrator</div>
<div class="r" style="left:1096.70px;top:579.90px;width:83.60px;height:17.50px;border:1px solid #e9e9e9;border-radius:9px;box-sizing:border-box;background:#fcfcfc;"></div>
<svg class="r" style="left:1103.60px;top:583.20px" width="13.50" height="10.50" viewBox="0 0 13.5 10.5"><path d="M3.5 0.6 H12.5 V7.9 H7.2" fill="none" stroke="#111" stroke-width="1.2"/><path d="M6.6 8.4 L9.2 5.8 L10.3 7.3 Z" fill="#111"/><circle cx="3.5" cy="4.5" r="1.85" fill="#111"/><path d="M0.2 9.9 Q0.4 7.1 3.5 7.1 Q6.6 7.1 6.8 9.9 Z" fill="#111"/></svg>
<div class="t" style="left:1122.80px;top:583.00px;font-size:10.50px;line-height:10.50px;transform:scaleX(0.8922);color:#5b9ad8;">0/4 Courses</div>
<div class="t" style="left:415.40px;top:602.00px;font-size:10.50px;line-height:10.50px;transform:scaleX(1.0470);color:#5b9ad8;">Report hazardous situations</div>
<svg class="r" style="left:637.60px;top:603.10px" width="9.60" height="9.60" viewBox="0 0 9.6 9.6"><circle cx="4.8" cy="4.8" r="4.75" fill="#f5b70a"/><rect x="4.05" y="2.1" width="1.5" height="3.3" rx="0.6" fill="#fff"/><circle cx="4.8" cy="7.1" r="0.85" fill="#fff"/></svg>
<div class="t" style="left:680.55px;top:604.00px;font-size:9.50px;line-height:9.50px;color:#444;">4</div>
<div class="r" style="left:700.30px;top:599.30px;width:32.40px;height:18.80px;background:rgb(186,222,172);border-radius:4.5px;"></div>
<div class="t" style="left:709.79px;top:605.00px;font-size:10.40px;line-height:10.40px;transform:scaleX(0.9284);color:#2b2b2b;">4.5</div>
<div class="t" style="left:745.88px;top:605.00px;font-size:10.40px;line-height:10.40px;transform:scaleX(0.9284);color:#e0334a;">-1</div>
<div class="r" style="left:767.64px;top:599.30px;width:32.40px;height:18.80px;background:rgb(179,219,181);border-radius:4.5px;"></div>
<div class="t" style="left:771.49px;top:605.00px;font-size:10.40px;line-height:10.40px;transform:scaleX(0.9284);color:#2b2b2b;">100%</div>
<div class="r" style="left:801.31px;top:599.30px;width:32.40px;height:18.80px;background:rgb(179,219,181);border-radius:4.5px;"></div>
<div class="t" style="left:814.82px;top:605.00px;font-size:10.40px;line-height:10.40px;transform:scaleX(0.9284);color:#2b2b2b;">5</div>
<div class="r" style="left:834.98px;top:599.30px;width:32.40px;height:18.80px;background:rgb(179,219,181);border-radius:4.5px;"></div>
<div class="t" style="left:838.83px;top:605.00px;font-size:10.40px;line-height:10.40px;transform:scaleX(0.9284);color:#2b2b2b;">100%</div>
<div class="r" style="left:868.65px;top:599.30px;width:32.40px;height:18.80px;background:rgb(201,232,251);border-radius:4.5px;"></div>
<div class="t" style="left:882.16px;top:605.00px;font-size:10.40px;line-height:10.40px;transform:scaleX(0.9284);color:#2b2b2b;">2</div>
<div class="r" style="left:902.32px;top:599.30px;width:32.40px;height:18.80px;background:rgb(194,224,162);border-radius:4.5px;"></div>
<div class="t" style="left:915.83px;top:605.00px;font-size:10.40px;line-height:10.40px;transform:scaleX(0.9284);color:#2b2b2b;">4</div>
<div class="r" style="left:935.99px;top:599.30px;width:32.40px;height:18.80px;background:rgb(179,219,181);border-radius:4.5px;"></div>
<div class="t" style="left:939.84px;top:605.00px;font-size:10.40px;line-height:10.40px;transform:scaleX(0.9284);color:#2b2b2b;">100%</div>
<div class="r" style="left:976.00px;top:598.60px;width:113.00px;height:17.20px;border:1px solid #e9e9e9;border-radius:9px;box-sizing:border-box;background:#fcfcfc;"></div>
<svg class="r" style="left:983.00px;top:599.10px" width="16.00" height="16.00" viewBox="0 0 16 16"><defs><clipPath id="cp17"><circle cx="8" cy="8" r="7.8"/></clipPath></defs><g clip-path="url(#cp17)"><rect width="16" height="16" fill="#b4b8bd"/><path d="M11 4 Q14 6 16 9 V16 H10 Z" fill="#6f7174"/><path d="M4.4 7 Q4.3 2.8 8 2.6 Q11.7 2.8 11.6 7 L11.2 10.8 Q8 14 4.8 10.8 Z" fill="#c29a80"/><path d="M4.2 6.2 Q4.2 1.6 8 1.6 Q11.8 1.6 11.8 6.2 L11.2 4.6 Q8 3.3 4.8 4.6 Z" fill="#4a3628"/><rect x="4.6" y="6.2" width="6.8" height="1.1" fill="#2e2a28"/><path d="M5 9.6 Q8 12.6 11 9.6 L10.6 11.6 Q8 13.6 5.4 11.6 Z" fill="#3f2e24"/><path d="M2.5 16 Q3.5 12.8 8 12.8 Q12.5 12.8 13.5 16 Z" fill="#d8c2b0"/></g></svg>
<div class="t" style="left:1002.00px;top:602.00px;font-size:10.50px;line-height:10.50px;transform:scaleX(0.9293);color:#5b9ad8;">John Administrator</div>
<div class="r" style="left:1096.70px;top:599.90px;width:83.60px;height:17.50px;border:1px solid #e9e9e9;border-radius:9px;box-sizing:border-box;background:#fcfcfc;"></div>
<svg class="r" style="left:1103.60px;top:603.20px" width="13.50" height="10.50" viewBox="0 0 13.5 10.5"><path d="M3.5 0.6 H12.5 V7.9 H7.2" fill="none" stroke="#111" stroke-width="1.2"/><path d="M6.6 8.4 L9.2 5.8 L10.3 7.3 Z" fill="#111"/><circle cx="3.5" cy="4.5" r="1.85" fill="#111"/><path d="M0.2 9.9 Q0.4 7.1 3.5 7.1 Q6.6 7.1 6.8 9.9 Z" fill="#111"/></svg>
<div class="t" style="left:1122.80px;top:603.00px;font-size:10.50px;line-height:10.50px;transform:scaleX(0.8922);color:#5b9ad8;">0/4 Courses</div>
<div class="r" style="left:381.50px;top:279.00px;width:1.00px;height:268.50px;border-left:1px dotted #444;"></div>
<div class="r" style="left:382.00px;top:287.30px;width:10.00px;height:1.00px;border-top:1px dotted #444;"></div>
<div class="r" style="left:402.00px;top:307.30px;width:10.00px;height:1.00px;border-top:1px dotted #444;"></div>
<div class="r" style="left:402.00px;top:327.30px;width:10.00px;height:1.00px;border-top:1px dotted #444;"></div>
<div class="r" style="left:382.00px;top:347.30px;width:10.00px;height:1.00px;border-top:1px dotted #444;"></div>
<div class="r" style="left:402.00px;top:367.30px;width:10.00px;height:1.00px;border-top:1px dotted #444;"></div>
<div class="r" style="left:402.00px;top:387.30px;width:10.00px;height:1.00px;border-top:1px dotted #444;"></div>
<div class="r" style="left:382.00px;top:407.30px;width:10.00px;height:1.00px;border-top:1px dotted #444;"></div>
<div class="r" style="left:402.00px;top:427.30px;width:10.00px;height:1.00px;border-top:1px dotted #444;"></div>
<div class="r" style="left:402.00px;top:447.30px;width:10.00px;height:1.00px;border-top:1px dotted #444;"></div>
<div class="r" style="left:402.00px;top:467.30px;width:10.00px;height:1.00px;border-top:1px dotted #444;"></div>
<div class="r" style="left:382.00px;top:487.30px;width:10.00px;height:1.00px;border-top:1px dotted #444;"></div>
<div class="r" style="left:402.00px;top:507.30px;width:10.00px;height:1.00px;border-top:1px dotted #444;"></div>
<div class="r" style="left:402.00px;top:527.30px;width:10.00px;height:1.00px;border-top:1px dotted #444;"></div>
<div class="r" style="left:382.00px;top:547.30px;width:10.00px;height:1.00px;border-top:1px dotted #444;"></div>
<div class="r" style="left:402.00px;top:567.30px;width:10.00px;height:1.00px;border-top:1px dotted #444;"></div>
<div class="r" style="left:402.00px;top:587.30px;width:10.00px;height:1.00px;border-top:1px dotted #444;"></div>
<div class="r" style="left:402.00px;top:607.30px;width:10.00px;height:1.00px;border-top:1px dotted #444;"></div>
<div class="r" style="left:401.50px;top:299.00px;width:1.00px;height:28.30px;border-left:1px dotted #444;"></div>
<div class="r" style="left:401.50px;top:359.00px;width:1.00px;height:28.30px;border-left:1px dotted #444;"></div>
<div class="r" style="left:401.50px;top:419.00px;width:1.00px;height:48.30px;border-left:1px dotted #444;"></div>
<div class="r" style="left:401.50px;top:499.00px;width:1.00px;height:28.30px;border-left:1px dotted #444;"></div>
<div class="r" style="left:401.50px;top:559.00px;width:1.00px;height:48.30px;border-left:1px dotted #444;"></div>
<div class="r" style="left:849.00px;top:231.00px;width:179.00px;height:250.00px;background:#e9e9e9;border:2px solid #c4c4c4;box-sizing:border-box;box-shadow:0 0 22px 3px rgba(0,0,0,.27);"></div>
<svg class="r" style="left:1012.00px;top:240.00px" width="9.50" height="9.00" viewBox="0 0 9.5 9"><path d="M1.1 1 L8.4 8 M8.4 1 L1.1 8" stroke="#111" stroke-width="2.4"/></svg>
<div class="t" style="left:884.00px;top:252.00px;font-size:12.50px;line-height:12.50px;color:#333;">Assembly efficiency</div>
<div class="t" style="left:916.40px;top:283.00px;font-size:11.00px;line-height:11.00px;font-weight:bold;transform:scaleX(0.8953);color:#111;">Skill level</div>
<div class="t" style="left:887.70px;top:300.00px;font-size:11.60px;line-height:11.60px;transform:scaleX(1.1525);color:#333;">N/A</div>
<div class="t" style="left:917.30px;top:300.00px;font-size:11.60px;line-height:11.60px;color:#333;">1</div>
<div class="t" style="left:932.00px;top:300.00px;font-size:11.60px;line-height:11.60px;color:#333;">2</div>
<div class="t" style="left:947.70px;top:300.00px;font-size:11.60px;line-height:11.60px;color:#333;">3</div>
<div class="t" style="left:963.00px;top:300.00px;font-size:11.60px;line-height:11.60px;color:#333;">4</div>
<div class="t" style="left:980.00px;top:300.00px;font-size:11.60px;line-height:11.60px;color:#333;">5</div>
<div class="r" style="left:887.00px;top:316.00px;width:103.80px;height:21.00px;background:#cacaca;"></div>
<svg class="r" style="left:891.00px;top:317.30px" width="15.00" height="15.00" viewBox="0 0 15 15"><circle cx="7.5" cy="7.5" r="6.9" fill="#fff" stroke="#8a8a8a" stroke-width="1"/></svg>
<svg class="r" style="left:910.80px;top:317.30px" width="15.00" height="15.00" viewBox="0 0 15 15"><circle cx="7.5" cy="7.5" r="6.9" fill="#fff" stroke="#8a8a8a" stroke-width="1"/></svg>
<svg class="r" style="left:926.90px;top:317.30px" width="15.00" height="15.00" viewBox="0 0 15 15"><circle cx="7.5" cy="7.5" r="6.9" fill="#fff" stroke="#8a8a8a" stroke-width="1"/></svg>
<svg class="r" style="left:943.30px;top:317.30px" width="15.00" height="15.00" viewBox="0 0 15 15"><circle cx="7.5" cy="7.5" r="6.9" fill="#fff" stroke="#3b7cf5" stroke-width="1.2"/><circle cx="7.5" cy="7.5" r="4.3" fill="#3b7cf5"/></svg>
<svg class="r" style="left:959.50px;top:317.30px" width="15.00" height="15.00" viewBox="0 0 15 15"><circle cx="7.5" cy="7.5" r="6.9" fill="#fff" stroke="#8a8a8a" stroke-width="1"/></svg>
<svg class="r" style="left:975.30px;top:317.30px" width="15.00" height="15.00" viewBox="0 0 15 15"><circle cx="7.5" cy="7.5" r="6.9" fill="#fff" stroke="#8a8a8a" stroke-width="1"/></svg>
<div class="t" style="left:867.20px;top:353.00px;font-size:11.20px;line-height:11.20px;transform:scaleX(0.9665);color:#333;">Legend</div>
<div class="r" style="left:884.80px;top:373.40px;width:4.60px;height:4.60px;background:#111;border-radius:50%;"></div>
<div class="t" style="left:898.90px;top:370.00px;font-size:11.20px;line-height:11.20px;transform:scaleX(0.9544);color:#333;">1: Low skill</div>
<div class="r" style="left:898.90px;top:379.60px;width:52.30px;height:1.00px;border-top:1px dotted #555;"></div>
<div class="r" style="left:884.80px;top:390.40px;width:4.60px;height:4.60px;background:#111;border-radius:50%;"></div>
<div class="t" style="left:898.90px;top:387.00px;font-size:11.20px;line-height:11.20px;transform:scaleX(0.9571);color:#333;">2: Basic capability</div>
<div class="r" style="left:898.90px;top:396.60px;width:85.80px;height:1.00px;border-top:1px dotted #555;"></div>
<div class="r" style="left:884.80px;top:407.00px;width:4.60px;height:4.60px;background:#111;border-radius:50%;"></div>
<div class="t" style="left:898.90px;top:404.00px;font-size:11.20px;line-height:11.20px;transform:scaleX(0.9893);color:#333;">3: Intermediate</div>
<div class="r" style="left:898.90px;top:413.20px;width:73.90px;height:1.00px;border-top:1px dotted #555;"></div>
<div class="r" style="left:884.80px;top:423.80px;width:4.60px;height:4.60px;background:#111;border-radius:50%;"></div>
<div class="t" style="left:898.90px;top:420.00px;font-size:11.20px;line-height:11.20px;transform:scaleX(0.9749);color:#333;">4: Advanced</div>
<div class="r" style="left:898.90px;top:430.00px;width:60.10px;height:1.00px;border-top:1px dotted #555;"></div>
<div class="r" style="left:884.80px;top:440.60px;width:4.60px;height:4.60px;background:#111;border-radius:50%;"></div>
<div class="t" style="left:898.90px;top:437.00px;font-size:11.20px;line-height:11.20px;transform:scaleX(0.9375);color:#333;">5: Expert</div>
<div class="r" style="left:898.90px;top:446.80px;width:42.00px;height:1.00px;border-top:1px dotted #555;"></div>
</body></html>
